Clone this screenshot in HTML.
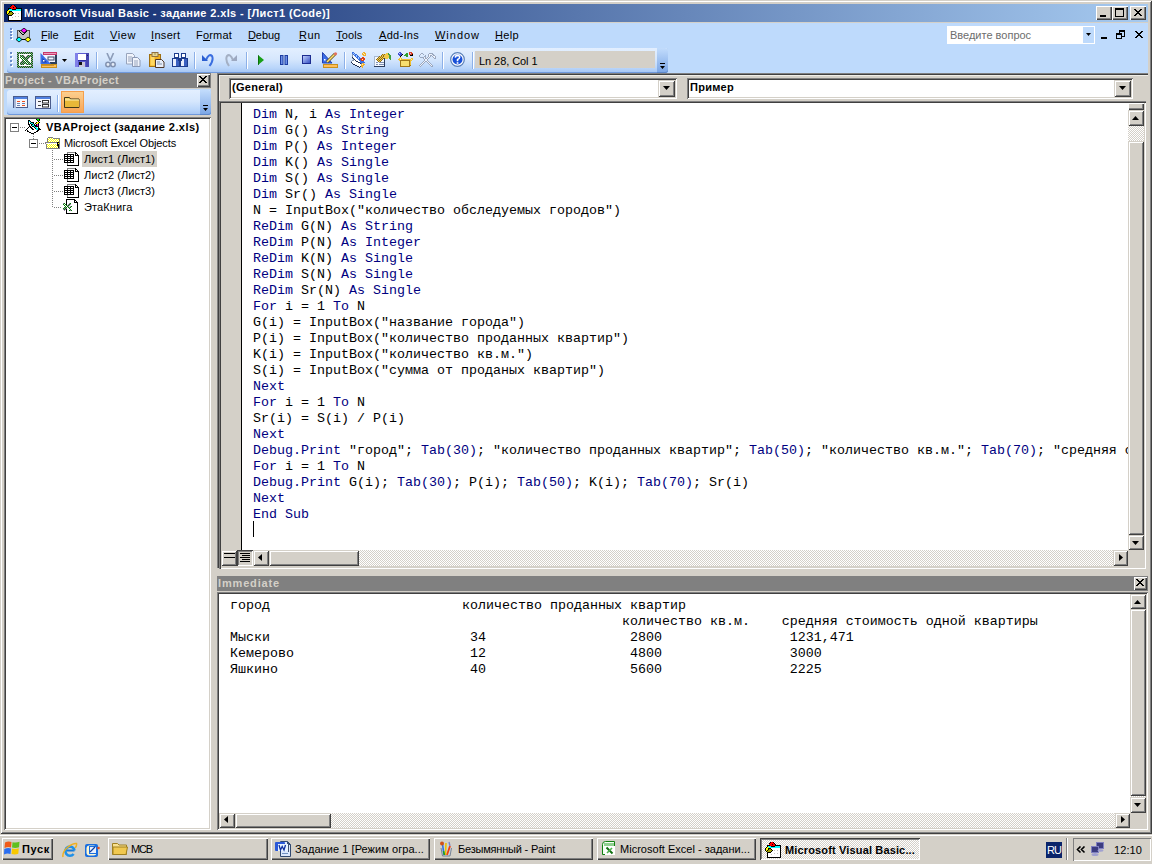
<!DOCTYPE html>
<html><head><meta charset="utf-8"><style>*{margin:0;padding:0;box-sizing:border-box}
html,body{width:1152px;height:864px;overflow:hidden;background:#d4d0c8;font-family:"Liberation Sans",sans-serif;font-size:11px;color:#000}
.a{position:absolute}
.t{white-space:nowrap}
.mono{font-family:"Liberation Mono",monospace;font-size:13.33px;line-height:16px;white-space:pre;color:#000}
.k{color:#000080}
.check{background-color:#fff;background-image:linear-gradient(45deg,#d4d0c8 25%,transparent 25%,transparent 75%,#d4d0c8 75%),linear-gradient(45deg,#d4d0c8 25%,transparent 25%,transparent 75%,#d4d0c8 75%);background-size:2px 2px;background-position:0 0,1px 1px}
svg{display:block}
</style></head><body>
<div class="a " style="left:0px;top:0px;width:1152px;height:834px;background:#d4d0c8;box-shadow:inset 1px 1px #d4d0c8,inset -1px -1px #404040,inset 2px 2px #fff,inset -2px -2px #808080;"></div>
<div class="a " style="left:4px;top:4px;width:1144px;height:18px;background:linear-gradient(to right,#0a246a,#a6caf0);"></div>
<svg class="a" style="left:6px;top:5px" width="16" height="16" shape-rendering="crispEdges"><rect x="5" y="0" width="1" height="1" fill="#000"/><rect x="6" y="0" width="2" height="1" fill="#ff0000"/><rect x="8" y="0" width="1" height="1" fill="#000"/><rect x="4" y="1" width="1" height="1" fill="#000"/><rect x="5" y="1" width="4" height="1" fill="#ff0000"/><rect x="9" y="1" width="1" height="1" fill="#000"/><rect x="4" y="2" width="3" height="1" fill="#ff0000"/><rect x="7" y="2" width="1" height="1" fill="#000"/><rect x="8" y="2" width="2" height="1" fill="#ff0000"/><rect x="10" y="2" width="1" height="1" fill="#000"/><rect x="2" y="3" width="3" height="1" fill="#000"/><rect x="5" y="3" width="5" height="1" fill="#ff0000"/><rect x="10" y="3" width="6" height="1" fill="#000"/><rect x="2" y="4" width="1" height="1" fill="#000"/><rect x="3" y="4" width="3" height="1" fill="#00ffff"/><rect x="6" y="4" width="4" height="1" fill="#000"/><rect x="10" y="4" width="5" height="1" fill="#00ffff"/><rect x="15" y="4" width="1" height="1" fill="#000"/><rect x="1" y="5" width="1" height="1" fill="#000"/><rect x="2" y="5" width="2" height="1" fill="#ffff00"/><rect x="4" y="5" width="11" height="1" fill="#00ffff"/><rect x="15" y="5" width="1" height="1" fill="#000"/><rect x="0" y="6" width="1" height="1" fill="#000"/><rect x="1" y="6" width="2" height="1" fill="#ffff00"/><rect x="3" y="6" width="3" height="1" fill="#000"/><rect x="6" y="6" width="9" height="1" fill="#fff"/><rect x="15" y="6" width="1" height="1" fill="#000"/><rect x="0" y="7" width="1" height="1" fill="#000"/><rect x="1" y="7" width="2" height="1" fill="#ffff00"/><rect x="3" y="7" width="1" height="1" fill="#000"/><rect x="4" y="7" width="2" height="1" fill="#a0a000"/><rect x="6" y="7" width="1" height="1" fill="#000"/><rect x="7" y="7" width="8" height="1" fill="#fff"/><rect x="15" y="7" width="1" height="1" fill="#000"/><rect x="0" y="8" width="1" height="1" fill="#000"/><rect x="1" y="8" width="1" height="1" fill="#ffff00"/><rect x="2" y="8" width="1" height="1" fill="#000"/><rect x="3" y="8" width="4" height="1" fill="#a0a000"/><rect x="7" y="8" width="1" height="1" fill="#000"/><rect x="8" y="8" width="1" height="1" fill="#fff"/><rect x="9" y="8" width="1" height="1" fill="#c0c0c0"/><rect x="10" y="8" width="2" height="1" fill="#fff"/><rect x="12" y="8" width="1" height="1" fill="#c0c0c0"/><rect x="13" y="8" width="2" height="1" fill="#fff"/><rect x="15" y="8" width="1" height="1" fill="#000"/><rect x="1" y="9" width="1" height="1" fill="#000"/><rect x="2" y="9" width="4" height="1" fill="#a0a000"/><rect x="6" y="9" width="1" height="1" fill="#000"/><rect x="7" y="9" width="8" height="1" fill="#fff"/><rect x="15" y="9" width="1" height="1" fill="#000"/><rect x="2" y="10" width="4" height="1" fill="#000"/><rect x="6" y="10" width="9" height="1" fill="#fff"/><rect x="15" y="10" width="1" height="1" fill="#000"/><rect x="2" y="11" width="1" height="1" fill="#000"/><rect x="3" y="11" width="6" height="1" fill="#fff"/><rect x="9" y="11" width="1" height="1" fill="#c0c0c0"/><rect x="10" y="11" width="2" height="1" fill="#fff"/><rect x="12" y="11" width="1" height="1" fill="#c0c0c0"/><rect x="13" y="11" width="2" height="1" fill="#fff"/><rect x="15" y="11" width="1" height="1" fill="#000"/><rect x="2" y="12" width="1" height="1" fill="#000"/><rect x="3" y="12" width="3" height="1" fill="#fff"/><rect x="6" y="12" width="1" height="1" fill="#c0c0c0"/><rect x="7" y="12" width="8" height="1" fill="#fff"/><rect x="15" y="12" width="1" height="1" fill="#000"/><rect x="2" y="13" width="1" height="1" fill="#000"/><rect x="3" y="13" width="12" height="1" fill="#fff"/><rect x="15" y="13" width="1" height="1" fill="#000"/><rect x="2" y="14" width="1" height="1" fill="#000"/><rect x="3" y="14" width="12" height="1" fill="#fff"/><rect x="15" y="14" width="1" height="1" fill="#000"/><rect x="2" y="15" width="14" height="1" fill="#000"/></svg>
<div class="a t" style="left:24px;top:7px;line-height:12px;font-size:11px;color:#fff;font-weight:bold;letter-spacing:0.370px;">Microsoft Visual Basic - задание 2.xls - [Лист1 (Code)]</div>
<div class="a " style="left:1096px;top:6px;width:16px;height:14px;background:#d4d0c8;box-shadow:inset 1px 1px #fff,inset -1px -1px #404040,inset -2px -2px #808080;"></div>
<div class="a " style="left:1112px;top:6px;width:16px;height:14px;background:#d4d0c8;box-shadow:inset 1px 1px #fff,inset -1px -1px #404040,inset -2px -2px #808080;"></div>
<div class="a " style="left:1130px;top:6px;width:16px;height:14px;background:#d4d0c8;box-shadow:inset 1px 1px #fff,inset -1px -1px #404040,inset -2px -2px #808080;"></div>
<div class="a " style="left:1100px;top:15px;width:6px;height:2px;background:#000;"></div>
<div class="a " style="left:1115px;top:8px;width:9px;height:9px;border:1px solid #000;border-top-width:2px;"></div>
<svg class="a" style="left:1134px;top:9px" width="8" height="7" shape-rendering="crispEdges" fill="#000"><rect x="0" y="0" width="2" height="1"/><rect x="6" y="0" width="2" height="1"/><rect x="1" y="1" width="2" height="1"/><rect x="5" y="1" width="2" height="1"/><rect x="2" y="2" width="4" height="1"/><rect x="3" y="3" width="2" height="1"/><rect x="2" y="4" width="4" height="1"/><rect x="1" y="5" width="2" height="1"/><rect x="5" y="5" width="2" height="1"/><rect x="0" y="6" width="2" height="1"/><rect x="6" y="6" width="2" height="1"/></svg>
<div class="a " style="left:4px;top:22px;width:1144px;height:1px;background:#d4d0c8;"></div>
<div class="a " style="left:4px;top:23px;width:1144px;height:50px;background:#bedafc;"></div>
<div class="a " style="left:10px;top:28px;width:2px;height:2px;background:#6a8ccb;box-shadow:1px 1px #fff;"></div>
<div class="a " style="left:10px;top:31px;width:2px;height:2px;background:#6a8ccb;box-shadow:1px 1px #fff;"></div>
<div class="a " style="left:10px;top:34px;width:2px;height:2px;background:#6a8ccb;box-shadow:1px 1px #fff;"></div>
<div class="a " style="left:10px;top:37px;width:2px;height:2px;background:#6a8ccb;box-shadow:1px 1px #fff;"></div>
<svg class="a" style="left:16px;top:28px" width="16" height="15"><rect x="1.5" y="2.5" width="12" height="9" fill="#c4c4c4" stroke="#505050"/><path d="M3 3 L7 7 L11 3" stroke="#000" stroke-width="1" fill="none"/><path d="M1 11.5 L14 11.5" stroke="#000"/><path d="M8 0 L11 2.5 L8 5 L5 2.5 Z" fill="#ff00ff" stroke="#000" stroke-width="0.8"/><path d="M3 9 L6 11.5 L3 14 L0 11.5 Z" fill="#00ffff" stroke="#000" stroke-width="0.8"/><path d="M12 9 L15 11.5 L12 14 L9 11.5 Z" fill="#ffff00" stroke="#000" stroke-width="0.8"/></svg>
<div class="a t" style="left:41px;top:29px;line-height:12px;font-size:11px;color:#000;letter-spacing:-0.059px;">File</div>
<div class="a t" style="left:74px;top:29px;line-height:12px;font-size:11px;color:#000;letter-spacing:0.258px;">Edit</div>
<div class="a t" style="left:110px;top:29px;line-height:12px;font-size:11px;color:#000;letter-spacing:0.586px;">View</div>
<div class="a t" style="left:151px;top:29px;line-height:12px;font-size:11px;color:#000;letter-spacing:0.331px;">Insert</div>
<div class="a t" style="left:196px;top:29px;line-height:12px;font-size:11px;color:#000;letter-spacing:0.193px;">Format</div>
<div class="a t" style="left:248px;top:29px;line-height:12px;font-size:11px;color:#000;letter-spacing:-0.084px;">Debug</div>
<div class="a t" style="left:299px;top:29px;line-height:12px;font-size:11px;color:#000;letter-spacing:0.438px;">Run</div>
<div class="a t" style="left:336px;top:29px;line-height:12px;font-size:11px;color:#000;letter-spacing:0.163px;">Tools</div>
<div class="a t" style="left:379px;top:29px;line-height:12px;font-size:11px;color:#000;letter-spacing:0.297px;">Add-Ins</div>
<div class="a t" style="left:435px;top:29px;line-height:12px;font-size:11px;color:#000;letter-spacing:0.979px;">Window</div>
<div class="a t" style="left:495px;top:29px;line-height:12px;font-size:11px;color:#000;letter-spacing:0.344px;">Help</div>
<div class="a " style="left:41px;top:40px;width:6px;height:1px;background:#000;"></div>
<div class="a " style="left:74px;top:40px;width:7px;height:1px;background:#000;"></div>
<div class="a " style="left:110px;top:40px;width:8px;height:1px;background:#000;"></div>
<div class="a " style="left:151px;top:40px;width:3px;height:1px;background:#000;"></div>
<div class="a " style="left:203px;top:40px;width:7px;height:1px;background:#000;"></div>
<div class="a " style="left:248px;top:40px;width:8px;height:1px;background:#000;"></div>
<div class="a " style="left:299px;top:40px;width:7px;height:1px;background:#000;"></div>
<div class="a " style="left:336px;top:40px;width:7px;height:1px;background:#000;"></div>
<div class="a " style="left:379px;top:40px;width:8px;height:1px;background:#000;"></div>
<div class="a " style="left:435px;top:40px;width:11px;height:1px;background:#000;"></div>
<div class="a " style="left:495px;top:40px;width:8px;height:1px;background:#000;"></div>
<div class="a " style="left:947px;top:26px;width:148px;height:18px;background:#fff;"></div>
<div class="a " style="left:1083px;top:27px;width:11px;height:16px;background:#bedafc;"></div>
<svg class="a" style="left:1086px;top:33px" width="5" height="3"><path d="M0 0h5l-2.5 3z" fill="#000"/></svg>
<div class="a t" style="left:950px;top:29px;line-height:12px;font-size:11px;color:#6d6d6d;">Введите вопрос</div>
<div class="a " style="left:1101px;top:37px;width:6px;height:2px;background:#000;"></div>
<svg class="a" style="left:1116px;top:30px" width="9" height="9" shape-rendering="crispEdges" fill="#000"><rect x="3" y="0" width="6" height="1"/><rect x="3" y="1" width="6" height="1"/><rect x="3" y="2" width="1" height="1"/><rect x="8" y="2" width="1" height="1"/><rect x="0" y="3" width="6" height="1"/><rect x="8" y="3" width="1" height="1"/><rect x="0" y="4" width="6" height="1"/><rect x="8" y="4" width="1" height="1"/><rect x="0" y="5" width="1" height="1"/><rect x="5" y="5" width="1" height="1"/><rect x="8" y="5" width="1" height="1"/><rect x="0" y="6" width="1" height="1"/><rect x="5" y="6" width="4" height="1"/><rect x="0" y="7" width="1" height="1"/><rect x="5" y="7" width="1" height="1"/><rect x="0" y="8" width="6" height="1"/></svg>
<svg class="a" style="left:1135px;top:31px" width="8" height="7" shape-rendering="crispEdges" fill="#000"><rect x="0" y="0" width="2" height="1"/><rect x="6" y="0" width="2" height="1"/><rect x="1" y="1" width="2" height="1"/><rect x="5" y="1" width="2" height="1"/><rect x="2" y="2" width="4" height="1"/><rect x="3" y="3" width="2" height="1"/><rect x="2" y="4" width="4" height="1"/><rect x="1" y="5" width="2" height="1"/><rect x="5" y="5" width="2" height="1"/><rect x="0" y="6" width="2" height="1"/><rect x="6" y="6" width="2" height="1"/></svg>
<div class="a " style="left:7px;top:48px;width:661px;height:25px;border-radius:3px;background:linear-gradient(to bottom,#e3efff 0%,#d6e7fd 45%,#b9d5fa 80%,#a3c4f3 100%);box-shadow:inset 0 -1px #6f99dc;"></div>
<div class="a " style="left:657px;top:48px;width:11px;height:25px;border-radius:0 3px 3px 0;background:linear-gradient(to bottom,#c2dcfc,#7aa5e5);box-shadow:inset 0 -1px #5d87c9;"></div>
<svg class="a" style="left:660px;top:63px" width="6" height="7"><path d="M0 0h5v1h-5z M0 3h5l-2.5 3z" fill="#000"/></svg>
<div class="a " style="left:10px;top:52px;width:2px;height:2px;background:#6a8ccb;box-shadow:1px 1px #fff;"></div>
<div class="a " style="left:10px;top:56px;width:2px;height:2px;background:#6a8ccb;box-shadow:1px 1px #fff;"></div>
<div class="a " style="left:10px;top:60px;width:2px;height:2px;background:#6a8ccb;box-shadow:1px 1px #fff;"></div>
<div class="a " style="left:10px;top:64px;width:2px;height:2px;background:#6a8ccb;box-shadow:1px 1px #fff;"></div>
<div class="a " style="left:96px;top:52px;width:1px;height:17px;background:#8cb0e8;box-shadow:1px 0 #fff;"></div>
<div class="a " style="left:194px;top:52px;width:1px;height:17px;background:#8cb0e8;box-shadow:1px 0 #fff;"></div>
<div class="a " style="left:246px;top:52px;width:1px;height:17px;background:#8cb0e8;box-shadow:1px 0 #fff;"></div>
<div class="a " style="left:344px;top:52px;width:1px;height:17px;background:#8cb0e8;box-shadow:1px 0 #fff;"></div>
<div class="a " style="left:442px;top:52px;width:1px;height:17px;background:#8cb0e8;box-shadow:1px 0 #fff;"></div>
<div class="a " style="left:472px;top:52px;width:1px;height:17px;background:#8cb0e8;box-shadow:1px 0 #fff;"></div>
<div class="a" style="left:0;top:0"><svg class="a" style="left:17px;top:52px" width="16" height="16" shape-rendering="crispEdges"><rect x="0" y="0" width="1" height="1" fill="#008000"/><rect x="1" y="0" width="1" height="1" fill="#9c80a8"/><rect x="2" y="0" width="1" height="1" fill="#008000"/><rect x="3" y="0" width="1" height="1" fill="#9c80a8"/><rect x="4" y="0" width="1" height="1" fill="#008000"/><rect x="5" y="0" width="1" height="1" fill="#9c80a8"/><rect x="6" y="0" width="1" height="1" fill="#008000"/><rect x="7" y="0" width="1" height="1" fill="#9c80a8"/><rect x="8" y="0" width="1" height="1" fill="#008000"/><rect x="9" y="0" width="1" height="1" fill="#9c80a8"/><rect x="10" y="0" width="1" height="1" fill="#008000"/><rect x="11" y="0" width="1" height="1" fill="#9c80a8"/><rect x="12" y="0" width="1" height="1" fill="#008000"/><rect x="13" y="0" width="1" height="1" fill="#9c80a8"/><rect x="14" y="0" width="1" height="1" fill="#008000"/><rect x="15" y="0" width="1" height="1" fill="#9c80a8"/><rect x="0" y="1" width="1" height="1" fill="#9c80a8"/><rect x="1" y="1" width="1" height="1" fill="#008000"/><rect x="2" y="1" width="1" height="1" fill="#9c80a8"/><rect x="3" y="1" width="1" height="1" fill="#008000"/><rect x="4" y="1" width="1" height="1" fill="#9c80a8"/><rect x="5" y="1" width="1" height="1" fill="#008000"/><rect x="6" y="1" width="1" height="1" fill="#9c80a8"/><rect x="7" y="1" width="1" height="1" fill="#008000"/><rect x="8" y="1" width="1" height="1" fill="#9c80a8"/><rect x="9" y="1" width="1" height="1" fill="#008000"/><rect x="10" y="1" width="1" height="1" fill="#9c80a8"/><rect x="11" y="1" width="1" height="1" fill="#008000"/><rect x="12" y="1" width="1" height="1" fill="#9c80a8"/><rect x="13" y="1" width="1" height="1" fill="#008000"/><rect x="14" y="1" width="1" height="1" fill="#9c80a8"/><rect x="15" y="1" width="1" height="1" fill="#008000"/><rect x="0" y="2" width="1" height="1" fill="#008000"/><rect x="1" y="2" width="1" height="1" fill="#9c80a8"/><rect x="2" y="2" width="1" height="1" fill="#fff"/><rect x="3" y="2" width="1" height="1" fill="#fff"/><rect x="4" y="2" width="1" height="1" fill="#fff"/><rect x="5" y="2" width="1" height="1" fill="#fff"/><rect x="6" y="2" width="1" height="1" fill="#fff"/><rect x="7" y="2" width="1" height="1" fill="#fff"/><rect x="8" y="2" width="1" height="1" fill="#fff"/><rect x="9" y="2" width="1" height="1" fill="#fff"/><rect x="10" y="2" width="1" height="1" fill="#fff"/><rect x="11" y="2" width="1" height="1" fill="#fff"/><rect x="12" y="2" width="1" height="1" fill="#fff"/><rect x="13" y="2" width="1" height="1" fill="#fff"/><rect x="14" y="2" width="1" height="1" fill="#008000"/><rect x="15" y="2" width="1" height="1" fill="#9c80a8"/><rect x="0" y="3" width="1" height="1" fill="#9c80a8"/><rect x="1" y="3" width="1" height="1" fill="#008000"/><rect x="2" y="3" width="1" height="1" fill="#fff"/><rect x="3" y="3" width="1" height="1" fill="#008000"/><rect x="4" y="3" width="1" height="1" fill="#9c80a8"/><rect x="5" y="3" width="1" height="1" fill="#008000"/><rect x="6" y="3" width="1" height="1" fill="#9c80a8"/><rect x="7" y="3" width="1" height="1" fill="#fff"/><rect x="8" y="3" width="1" height="1" fill="#fff"/><rect x="9" y="3" width="1" height="1" fill="#fff"/><rect x="10" y="3" width="1" height="1" fill="#9c80a8"/><rect x="11" y="3" width="1" height="1" fill="#008000"/><rect x="12" y="3" width="1" height="1" fill="#9c80a8"/><rect x="13" y="3" width="1" height="1" fill="#008000"/><rect x="14" y="3" width="1" height="1" fill="#9c80a8"/><rect x="15" y="3" width="1" height="1" fill="#008000"/><rect x="0" y="4" width="1" height="1" fill="#008000"/><rect x="1" y="4" width="1" height="1" fill="#9c80a8"/><rect x="2" y="4" width="1" height="1" fill="#fff"/><rect x="3" y="4" width="1" height="1" fill="#9c80a8"/><rect x="4" y="4" width="1" height="1" fill="#008000"/><rect x="5" y="4" width="1" height="1" fill="#9c80a8"/><rect x="6" y="4" width="1" height="1" fill="#008000"/><rect x="7" y="4" width="1" height="1" fill="#9c80a8"/><rect x="8" y="4" width="1" height="1" fill="#fff"/><rect x="9" y="4" width="1" height="1" fill="#9c80a8"/><rect x="10" y="4" width="1" height="1" fill="#008000"/><rect x="11" y="4" width="1" height="1" fill="#9c80a8"/><rect x="12" y="4" width="1" height="1" fill="#008000"/><rect x="13" y="4" width="1" height="1" fill="#9c80a8"/><rect x="14" y="4" width="1" height="1" fill="#008000"/><rect x="15" y="4" width="1" height="1" fill="#9c80a8"/><rect x="0" y="5" width="1" height="1" fill="#9c80a8"/><rect x="1" y="5" width="1" height="1" fill="#008000"/><rect x="2" y="5" width="1" height="1" fill="#fff"/><rect x="3" y="5" width="1" height="1" fill="#008000"/><rect x="4" y="5" width="1" height="1" fill="#fff"/><rect x="5" y="5" width="1" height="1" fill="#008000"/><rect x="6" y="5" width="1" height="1" fill="#9c80a8"/><rect x="7" y="5" width="1" height="1" fill="#008000"/><rect x="8" y="5" width="1" height="1" fill="#9c80a8"/><rect x="9" y="5" width="1" height="1" fill="#008000"/><rect x="10" y="5" width="1" height="1" fill="#9c80a8"/><rect x="11" y="5" width="1" height="1" fill="#008000"/><rect x="12" y="5" width="1" height="1" fill="#9c80a8"/><rect x="13" y="5" width="1" height="1" fill="#fff"/><rect x="14" y="5" width="1" height="1" fill="#9c80a8"/><rect x="15" y="5" width="1" height="1" fill="#008000"/><rect x="0" y="6" width="1" height="1" fill="#008000"/><rect x="1" y="6" width="1" height="1" fill="#9c80a8"/><rect x="2" y="6" width="1" height="1" fill="#fff"/><rect x="3" y="6" width="1" height="1" fill="#fff"/><rect x="4" y="6" width="1" height="1" fill="#008000"/><rect x="5" y="6" width="1" height="1" fill="#fff"/><rect x="6" y="6" width="1" height="1" fill="#008000"/><rect x="7" y="6" width="1" height="1" fill="#9c80a8"/><rect x="8" y="6" width="1" height="1" fill="#008000"/><rect x="9" y="6" width="1" height="1" fill="#9c80a8"/><rect x="10" y="6" width="1" height="1" fill="#008000"/><rect x="11" y="6" width="1" height="1" fill="#9c80a8"/><rect x="12" y="6" width="1" height="1" fill="#fff"/><rect x="13" y="6" width="1" height="1" fill="#fff"/><rect x="14" y="6" width="1" height="1" fill="#008000"/><rect x="15" y="6" width="1" height="1" fill="#9c80a8"/><rect x="0" y="7" width="1" height="1" fill="#9c80a8"/><rect x="1" y="7" width="1" height="1" fill="#008000"/><rect x="2" y="7" width="1" height="1" fill="#fff"/><rect x="3" y="7" width="1" height="1" fill="#fff"/><rect x="4" y="7" width="1" height="1" fill="#fff"/><rect x="5" y="7" width="1" height="1" fill="#008000"/><rect x="6" y="7" width="1" height="1" fill="#fff"/><rect x="7" y="7" width="1" height="1" fill="#008000"/><rect x="8" y="7" width="1" height="1" fill="#9c80a8"/><rect x="9" y="7" width="1" height="1" fill="#008000"/><rect x="10" y="7" width="1" height="1" fill="#9c80a8"/><rect x="11" y="7" width="1" height="1" fill="#fff"/><rect x="12" y="7" width="1" height="1" fill="#fff"/><rect x="13" y="7" width="1" height="1" fill="#fff"/><rect x="14" y="7" width="1" height="1" fill="#9c80a8"/><rect x="15" y="7" width="1" height="1" fill="#008000"/><rect x="0" y="8" width="1" height="1" fill="#008000"/><rect x="1" y="8" width="1" height="1" fill="#9c80a8"/><rect x="2" y="8" width="1" height="1" fill="#fff"/><rect x="3" y="8" width="1" height="1" fill="#fff"/><rect x="4" y="8" width="1" height="1" fill="#fff"/><rect x="5" y="8" width="1" height="1" fill="#9c80a8"/><rect x="6" y="8" width="1" height="1" fill="#008000"/><rect x="7" y="8" width="1" height="1" fill="#fff"/><rect x="8" y="8" width="1" height="1" fill="#008000"/><rect x="9" y="8" width="1" height="1" fill="#9c80a8"/><rect x="10" y="8" width="1" height="1" fill="#008000"/><rect x="11" y="8" width="1" height="1" fill="#fff"/><rect x="12" y="8" width="1" height="1" fill="#fff"/><rect x="13" y="8" width="1" height="1" fill="#fff"/><rect x="14" y="8" width="1" height="1" fill="#008000"/><rect x="15" y="8" width="1" height="1" fill="#9c80a8"/><rect x="0" y="9" width="1" height="1" fill="#9c80a8"/><rect x="1" y="9" width="1" height="1" fill="#008000"/><rect x="2" y="9" width="1" height="1" fill="#fff"/><rect x="3" y="9" width="1" height="1" fill="#fff"/><rect x="4" y="9" width="1" height="1" fill="#9c80a8"/><rect x="5" y="9" width="1" height="1" fill="#008000"/><rect x="6" y="9" width="1" height="1" fill="#9c80a8"/><rect x="7" y="9" width="1" height="1" fill="#008000"/><rect x="8" y="9" width="1" height="1" fill="#fff"/><rect x="9" y="9" width="1" height="1" fill="#008000"/><rect x="10" y="9" width="1" height="1" fill="#9c80a8"/><rect x="11" y="9" width="1" height="1" fill="#008000"/><rect x="12" y="9" width="1" height="1" fill="#fff"/><rect x="13" y="9" width="1" height="1" fill="#fff"/><rect x="14" y="9" width="1" height="1" fill="#9c80a8"/><rect x="15" y="9" width="1" height="1" fill="#008000"/><rect x="0" y="10" width="1" height="1" fill="#008000"/><rect x="1" y="10" width="1" height="1" fill="#9c80a8"/><rect x="2" y="10" width="1" height="1" fill="#fff"/><rect x="3" y="10" width="1" height="1" fill="#9c80a8"/><rect x="4" y="10" width="1" height="1" fill="#008000"/><rect x="5" y="10" width="1" height="1" fill="#9c80a8"/><rect x="6" y="10" width="1" height="1" fill="#008000"/><rect x="7" y="10" width="1" height="1" fill="#9c80a8"/><rect x="8" y="10" width="1" height="1" fill="#008000"/><rect x="9" y="10" width="1" height="1" fill="#fff"/><rect x="10" y="10" width="1" height="1" fill="#008000"/><rect x="11" y="10" width="1" height="1" fill="#9c80a8"/><rect x="12" y="10" width="1" height="1" fill="#008000"/><rect x="13" y="10" width="1" height="1" fill="#fff"/><rect x="14" y="10" width="1" height="1" fill="#008000"/><rect x="15" y="10" width="1" height="1" fill="#9c80a8"/><rect x="0" y="11" width="1" height="1" fill="#9c80a8"/><rect x="1" y="11" width="1" height="1" fill="#008000"/><rect x="2" y="11" width="1" height="1" fill="#fff"/><rect x="3" y="11" width="1" height="1" fill="#008000"/><rect x="4" y="11" width="1" height="1" fill="#9c80a8"/><rect x="5" y="11" width="1" height="1" fill="#008000"/><rect x="6" y="11" width="1" height="1" fill="#9c80a8"/><rect x="7" y="11" width="1" height="1" fill="#008000"/><rect x="8" y="11" width="1" height="1" fill="#9c80a8"/><rect x="9" y="11" width="1" height="1" fill="#008000"/><rect x="10" y="11" width="1" height="1" fill="#fff"/><rect x="11" y="11" width="1" height="1" fill="#008000"/><rect x="12" y="11" width="1" height="1" fill="#9c80a8"/><rect x="13" y="11" width="1" height="1" fill="#008000"/><rect x="14" y="11" width="1" height="1" fill="#9c80a8"/><rect x="15" y="11" width="1" height="1" fill="#008000"/><rect x="0" y="12" width="1" height="1" fill="#008000"/><rect x="1" y="12" width="1" height="1" fill="#9c80a8"/><rect x="2" y="12" width="1" height="1" fill="#fff"/><rect x="3" y="12" width="1" height="1" fill="#9c80a8"/><rect x="4" y="12" width="1" height="1" fill="#008000"/><rect x="5" y="12" width="1" height="1" fill="#9c80a8"/><rect x="6" y="12" width="1" height="1" fill="#008000"/><rect x="7" y="12" width="1" height="1" fill="#fff"/><rect x="8" y="12" width="1" height="1" fill="#fff"/><rect x="9" y="12" width="1" height="1" fill="#9c80a8"/><rect x="10" y="12" width="1" height="1" fill="#008000"/><rect x="11" y="12" width="1" height="1" fill="#9c80a8"/><rect x="12" y="12" width="1" height="1" fill="#008000"/><rect x="13" y="12" width="1" height="1" fill="#9c80a8"/><rect x="14" y="12" width="1" height="1" fill="#008000"/><rect x="15" y="12" width="1" height="1" fill="#9c80a8"/><rect x="0" y="13" width="1" height="1" fill="#9c80a8"/><rect x="1" y="13" width="1" height="1" fill="#008000"/><rect x="2" y="13" width="1" height="1" fill="#fff"/><rect x="3" y="13" width="1" height="1" fill="#fff"/><rect x="4" y="13" width="1" height="1" fill="#fff"/><rect x="5" y="13" width="1" height="1" fill="#fff"/><rect x="6" y="13" width="1" height="1" fill="#fff"/><rect x="7" y="13" width="1" height="1" fill="#fff"/><rect x="8" y="13" width="1" height="1" fill="#fff"/><rect x="9" y="13" width="1" height="1" fill="#fff"/><rect x="10" y="13" width="1" height="1" fill="#fff"/><rect x="11" y="13" width="1" height="1" fill="#fff"/><rect x="12" y="13" width="1" height="1" fill="#fff"/><rect x="13" y="13" width="1" height="1" fill="#fff"/><rect x="14" y="13" width="1" height="1" fill="#9c80a8"/><rect x="15" y="13" width="1" height="1" fill="#008000"/><rect x="0" y="14" width="1" height="1" fill="#008000"/><rect x="1" y="14" width="1" height="1" fill="#9c80a8"/><rect x="2" y="14" width="1" height="1" fill="#008000"/><rect x="3" y="14" width="1" height="1" fill="#9c80a8"/><rect x="4" y="14" width="1" height="1" fill="#008000"/><rect x="5" y="14" width="1" height="1" fill="#9c80a8"/><rect x="6" y="14" width="1" height="1" fill="#008000"/><rect x="7" y="14" width="1" height="1" fill="#9c80a8"/><rect x="8" y="14" width="1" height="1" fill="#008000"/><rect x="9" y="14" width="1" height="1" fill="#9c80a8"/><rect x="10" y="14" width="1" height="1" fill="#008000"/><rect x="11" y="14" width="1" height="1" fill="#9c80a8"/><rect x="12" y="14" width="1" height="1" fill="#008000"/><rect x="13" y="14" width="1" height="1" fill="#9c80a8"/><rect x="14" y="14" width="1" height="1" fill="#008000"/><rect x="15" y="14" width="1" height="1" fill="#9c80a8"/><rect x="0" y="15" width="1" height="1" fill="#9c80a8"/><rect x="1" y="15" width="1" height="1" fill="#008000"/><rect x="2" y="15" width="1" height="1" fill="#9c80a8"/><rect x="3" y="15" width="1" height="1" fill="#008000"/><rect x="4" y="15" width="1" height="1" fill="#9c80a8"/><rect x="5" y="15" width="1" height="1" fill="#008000"/><rect x="6" y="15" width="1" height="1" fill="#9c80a8"/><rect x="7" y="15" width="1" height="1" fill="#008000"/><rect x="8" y="15" width="1" height="1" fill="#9c80a8"/><rect x="9" y="15" width="1" height="1" fill="#008000"/><rect x="10" y="15" width="1" height="1" fill="#9c80a8"/><rect x="11" y="15" width="1" height="1" fill="#008000"/><rect x="12" y="15" width="1" height="1" fill="#9c80a8"/><rect x="13" y="15" width="1" height="1" fill="#008000"/><rect x="14" y="15" width="1" height="1" fill="#9c80a8"/><rect x="15" y="15" width="1" height="1" fill="#008000"/></svg><svg class="a" style="left:40px;top:52px" width="17" height="16"><rect x="3" y="0" width="14" height="3" fill="#c8386a"/><rect x="4" y="1" width="12" height="1" fill="#e898b8"/><rect x="4" y="3" width="12" height="9" fill="#f4f4ff"/><rect x="15" y="3" width="2" height="9" fill="#2c405c"/><rect x="10" y="10" width="7" height="2" fill="#2c405c"/><rect x="8" y="5" width="6" height="3" fill="none" stroke="#3c4c68" stroke-width="1"/><path d="M0.5 1 L0.5 12 L11 12 Z" fill="#3a6ee8"/><path d="M2.5 6 L2.5 10.5 L7 10.5 Z" fill="#1a3ca8"/><rect x="3" y="8" width="1.5" height="1.5" fill="#fff"/><rect x="1" y="12" width="16" height="4" fill="#c8901c"/><rect x="2" y="13" width="14" height="2" fill="#ffbe58"/><path d="M3 13v1M5 13v1M7 13v1M9 13v1M11 13v1M13 13v1" stroke="#a06a10" stroke-width="1"/></svg><svg class="a" style="left:62px;top:59px" width="5" height="3"><path d="M0 0h5l-2.5 3z" fill="#000"/></svg><svg class="a" style="left:75px;top:53px" width="15" height="14"><rect x="0" y="0" width="14" height="14" rx="1" fill="#5a5ad0"/><rect x="0" y="0" width="3" height="14" fill="#8080e8"/><rect x="11" y="0" width="3" height="14" fill="#4444b0"/><rect x="3" y="1" width="8" height="6" fill="#fff"/><rect x="3" y="7" width="8" height="1" fill="#3030a0"/><rect x="4" y="9" width="6" height="5" fill="#c8c8d8"/><rect x="4" y="9" width="3" height="3" fill="#101010"/><rect x="12" y="2" width="1" height="1" fill="#202060"/></svg><svg class="a" style="left:105px;top:53px" width="11" height="15"><path d="M2 0 L5.5 8 M8.5 0 L5 8" stroke="#8c9cb8" stroke-width="1.6" fill="none"/><circle cx="3" cy="11.5" r="2.2" stroke="#8292b0" stroke-width="1.5" fill="#e4ecf8"/><circle cx="8" cy="11.5" r="2.2" stroke="#8292b0" stroke-width="1.5" fill="#e4ecf8"/></svg><svg class="a" style="left:126px;top:53px" width="15" height="14"><path d="M0.5 0.5h6l2 2v8.5h-8z" fill="#f0f4fc" stroke="#98a4bc"/><path d="M2 4h4M2 6h4M2 8h4" stroke="#98a4bc"/><path d="M6.5 4.5h5l2.5 2.5v6.5h-7.5z" fill="#f0f4fc" stroke="#8a98b4"/><path d="M8 8h4M8 10h4M8 12h4" stroke="#98a4bc"/></svg><svg class="a" style="left:149px;top:52px" width="16" height="16"><rect x="0.5" y="2.5" width="11" height="12" fill="#f0b020" stroke="#a07010"/><rect x="1.5" y="3.5" width="4" height="10" fill="#ffd860"/><rect x="3" y="0.5" width="6" height="4" fill="#e8d890" stroke="#907040"/><rect x="5.5" y="1.5" width="1" height="1" fill="#404040"/><path d="M6.5 7.5h6l2.5 2.5v5.5h-8.5z" fill="#e8eef8" stroke="#503828"/><path d="M8 10h3M8 12h5" stroke="#8090a8"/></svg><svg class="a" style="left:172px;top:52px" width="16" height="16"><rect x="2.5" y="1.5" width="4" height="4" fill="#fff" stroke="#1c3c8c"/><rect x="9.5" y="1.5" width="4" height="4" fill="#fff" stroke="#1c3c8c"/><rect x="0.5" y="6.5" width="7" height="8" fill="#e8eefc" stroke="#1c3c8c"/><rect x="8.5" y="6.5" width="7" height="8" fill="#e8eefc" stroke="#1c3c8c"/><rect x="4" y="7" width="3" height="7" fill="#3a60c0"/><rect x="12" y="7" width="3" height="7" fill="#3a60c0"/><rect x="6" y="6" width="4" height="3" fill="#1c3c8c"/></svg><svg class="a" style="left:202px;top:52px" width="13" height="16"><path d="M4 8 Q7 1 10 4 Q12 8 7.5 14" stroke="#3a6ee0" stroke-width="2" fill="none"/><path d="M0 3 L0 9 L6 9 Z" fill="#2a5ed0"/></svg><svg class="a" style="left:224px;top:52px" width="14" height="16"><path d="M9 8 Q6 1 3 4 Q1 8 5 14" stroke="#a4b0c4" stroke-width="2" fill="none"/><path d="M13 3 L13 9 L7 9 Z" fill="#9ca8c0"/></svg><svg class="a" style="left:258px;top:55px" width="6" height="10"><path d="M0 0 L6 5 L0 10 Z" fill="#18a018"/><path d="M0 0 L0 10 L1 9.5 L1 1 Z" fill="#0a700a"/></svg><svg class="a" style="left:280px;top:55px" width="8" height="10"><rect x="0.5" y="0.5" width="2.5" height="9" fill="#6c90e8" stroke="#1c3ca0"/><rect x="5" y="0.5" width="2.5" height="9" fill="#6c90e8" stroke="#1c3ca0"/></svg><svg class="a" style="left:302px;top:55px" width="9" height="9"><defs><linearGradient id="gs" x1="0" y1="0" x2="1" y2="1"><stop offset="0" stop-color="#c8d8ff"/><stop offset="1" stop-color="#2c48c0"/></linearGradient></defs><rect x="0.5" y="0.5" width="8" height="8" fill="url(#gs)" stroke="#1c2c90"/></svg><svg class="a" style="left:322px;top:52px" width="16" height="16"><path d="M0.5 0.5 L0.5 11 L10 11 Z" fill="#3a6ee8" stroke="#2040b0"/><rect x="2" y="7" width="1.5" height="1.5" fill="#fff"/><path d="M5 10 L13 2" stroke="#5a4818" stroke-width="3"/><path d="M5 10 L13 2" stroke="#ffe070" stroke-width="1.6"/><circle cx="13.5" cy="1.8" r="1.6" fill="#e07060"/><rect x="1" y="12" width="15" height="4" fill="#c8901c"/><rect x="2" y="13" width="13" height="2" fill="#ffbe58"/></svg><svg class="a" style="left:350px;top:52px" width="17" height="16" shape-rendering="crispEdges"><rect x="2" y="0" width="2" height="1" fill="#3a70e0"/><rect x="13" y="0" width="2" height="1" fill="#f0b030"/><rect x="2" y="1" width="1" height="1" fill="#3a70e0"/><rect x="3" y="1" width="1" height="1" fill="#a0c8ff"/><rect x="4" y="1" width="1" height="1" fill="#3a70e0"/><rect x="12" y="1" width="1" height="1" fill="#f0b030"/><rect x="13" y="1" width="1" height="1" fill="#fff0b0"/><rect x="14" y="1" width="2" height="1" fill="#f0b030"/><rect x="2" y="2" width="1" height="1" fill="#8898b0"/><rect x="3" y="2" width="1" height="1" fill="#3a70e0"/><rect x="4" y="2" width="1" height="1" fill="#a0c8ff"/><rect x="5" y="2" width="2" height="1" fill="#3a70e0"/><rect x="12" y="2" width="2" height="1" fill="#f0b030"/><rect x="14" y="2" width="1" height="1" fill="#fff0b0"/><rect x="15" y="2" width="1" height="1" fill="#f0b030"/><rect x="2" y="3" width="1" height="1" fill="#8898b0"/><rect x="3" y="3" width="1" height="1" fill="#fff"/><rect x="4" y="3" width="2" height="1" fill="#3a70e0"/><rect x="6" y="3" width="1" height="1" fill="#a0c8ff"/><rect x="7" y="3" width="1" height="1" fill="#3a70e0"/><rect x="13" y="3" width="3" height="1" fill="#f0b030"/><rect x="2" y="4" width="1" height="1" fill="#8898b0"/><rect x="3" y="4" width="2" height="1" fill="#fff"/><rect x="5" y="4" width="1" height="1" fill="#3a70e0"/><rect x="6" y="4" width="1" height="1" fill="#a0c8ff"/><rect x="7" y="4" width="2" height="1" fill="#3a70e0"/><rect x="2" y="5" width="1" height="1" fill="#203050"/><rect x="3" y="5" width="3" height="1" fill="#fff"/><rect x="6" y="5" width="2" height="1" fill="#3a70e0"/><rect x="8" y="5" width="1" height="1" fill="#a0c8ff"/><rect x="9" y="5" width="1" height="1" fill="#3a70e0"/><rect x="12" y="5" width="2" height="1" fill="#e04018"/><rect x="2" y="6" width="1" height="1" fill="#8898b0"/><rect x="3" y="6" width="1" height="1" fill="#203050"/><rect x="4" y="6" width="3" height="1" fill="#fff"/><rect x="7" y="6" width="1" height="1" fill="#3a70e0"/><rect x="8" y="6" width="1" height="1" fill="#a0c8ff"/><rect x="9" y="6" width="2" height="1" fill="#3a70e0"/><rect x="11" y="6" width="4" height="1" fill="#e04018"/><rect x="3" y="7" width="1" height="1" fill="#8898b0"/><rect x="4" y="7" width="1" height="1" fill="#203050"/><rect x="5" y="7" width="3" height="1" fill="#fff"/><rect x="8" y="7" width="2" height="1" fill="#3a70e0"/><rect x="10" y="7" width="2" height="1" fill="#e04018"/><rect x="12" y="7" width="1" height="1" fill="#fff0b0"/><rect x="13" y="7" width="2" height="1" fill="#e04018"/><rect x="2" y="8" width="2" height="1" fill="#8898b0"/><rect x="4" y="8" width="1" height="1" fill="#fff"/><rect x="5" y="8" width="1" height="1" fill="#203050"/><rect x="6" y="8" width="3" height="1" fill="#fff"/><rect x="9" y="8" width="2" height="1" fill="#3a70e0"/><rect x="11" y="8" width="3" height="1" fill="#e04018"/><rect x="1" y="9" width="1" height="1" fill="#8898b0"/><rect x="2" y="9" width="4" height="1" fill="#fff"/><rect x="6" y="9" width="2" height="1" fill="#203050"/><rect x="8" y="9" width="2" height="1" fill="#fff"/><rect x="10" y="9" width="4" height="1" fill="#3a70e0"/><rect x="1" y="10" width="1" height="1" fill="#203050"/><rect x="2" y="10" width="6" height="1" fill="#fff"/><rect x="8" y="10" width="2" height="1" fill="#203050"/><rect x="10" y="10" width="5" height="1" fill="#3a70e0"/><rect x="2" y="11" width="1" height="1" fill="#203050"/><rect x="3" y="11" width="7" height="1" fill="#fff"/><rect x="10" y="11" width="1" height="1" fill="#203050"/><rect x="11" y="11" width="1" height="1" fill="#3a70e0"/><rect x="12" y="11" width="2" height="1" fill="#f0b030"/><rect x="3" y="12" width="2" height="1" fill="#203050"/><rect x="5" y="12" width="6" height="1" fill="#fff"/><rect x="11" y="12" width="1" height="1" fill="#f0b030"/><rect x="12" y="12" width="1" height="1" fill="#fff0b0"/><rect x="13" y="12" width="2" height="1" fill="#f0b030"/><rect x="5" y="13" width="2" height="1" fill="#203050"/><rect x="7" y="13" width="4" height="1" fill="#fff"/><rect x="11" y="13" width="3" height="1" fill="#f0b030"/><rect x="7" y="14" width="2" height="1" fill="#203050"/><rect x="9" y="14" width="1" height="1" fill="#fff"/><rect x="10" y="14" width="1" height="1" fill="#203050"/><rect x="11" y="14" width="2" height="1" fill="#f0b030"/><rect x="9" y="15" width="1" height="1" fill="#203050"/><rect x="12" y="15" width="1" height="1" fill="#f0b030"/></svg><svg class="a" style="left:374px;top:53px" width="17" height="14" shape-rendering="crispEdges"><rect x="12" y="0" width="2" height="1" fill="#f0c848"/><rect x="14" y="0" width="1" height="1" fill="#40a040"/><rect x="8" y="1" width="1" height="1" fill="#8a6a18"/><rect x="9" y="1" width="1" height="1" fill="#f0c848"/><rect x="10" y="1" width="1" height="1" fill="#8a6a18"/><rect x="11" y="1" width="3" height="1" fill="#f0c848"/><rect x="14" y="1" width="2" height="1" fill="#40a040"/><rect x="7" y="2" width="1" height="1" fill="#8a6a18"/><rect x="8" y="2" width="1" height="1" fill="#f0c848"/><rect x="9" y="2" width="1" height="1" fill="#8a6a18"/><rect x="10" y="2" width="5" height="1" fill="#f0c848"/><rect x="15" y="2" width="2" height="1" fill="#40a040"/><rect x="0" y="3" width="5" height="1" fill="#a8b8d0"/><rect x="5" y="3" width="1" height="1" fill="#8a6a18"/><rect x="6" y="3" width="1" height="1" fill="#f0c848"/><rect x="7" y="3" width="1" height="1" fill="#8a6a18"/><rect x="8" y="3" width="1" height="1" fill="#f0c848"/><rect x="9" y="3" width="1" height="1" fill="#8a6a18"/><rect x="10" y="3" width="5" height="1" fill="#f0c848"/><rect x="15" y="3" width="2" height="1" fill="#40a040"/><rect x="0" y="4" width="1" height="1" fill="#a8b8d0"/><rect x="1" y="4" width="3" height="1" fill="#f4f8ff"/><rect x="4" y="4" width="1" height="1" fill="#8a6a18"/><rect x="5" y="4" width="1" height="1" fill="#f0c848"/><rect x="6" y="4" width="1" height="1" fill="#8a6a18"/><rect x="7" y="4" width="1" height="1" fill="#f0c848"/><rect x="8" y="4" width="1" height="1" fill="#8a6a18"/><rect x="9" y="4" width="6" height="1" fill="#f0c848"/><rect x="15" y="4" width="2" height="1" fill="#40a040"/><rect x="0" y="5" width="1" height="1" fill="#a8b8d0"/><rect x="1" y="5" width="2" height="1" fill="#f4f8ff"/><rect x="3" y="5" width="1" height="1" fill="#8a6a18"/><rect x="4" y="5" width="1" height="1" fill="#f0c848"/><rect x="5" y="5" width="1" height="1" fill="#8a6a18"/><rect x="6" y="5" width="1" height="1" fill="#f0c848"/><rect x="7" y="5" width="1" height="1" fill="#8a6a18"/><rect x="8" y="5" width="1" height="1" fill="#f0c848"/><rect x="9" y="5" width="1" height="1" fill="#8a6a18"/><rect x="10" y="5" width="1" height="1" fill="#2c3c5c"/><rect x="11" y="5" width="3" height="1" fill="#f0c848"/><rect x="15" y="5" width="2" height="1" fill="#40a040"/><rect x="0" y="6" width="1" height="1" fill="#a8b8d0"/><rect x="1" y="6" width="1" height="1" fill="#f4f8ff"/><rect x="2" y="6" width="1" height="1" fill="#8a6a18"/><rect x="3" y="6" width="1" height="1" fill="#f0c848"/><rect x="4" y="6" width="1" height="1" fill="#8a6a18"/><rect x="5" y="6" width="1" height="1" fill="#f0c848"/><rect x="6" y="6" width="1" height="1" fill="#8a6a18"/><rect x="7" y="6" width="1" height="1" fill="#f0c848"/><rect x="8" y="6" width="1" height="1" fill="#8a6a18"/><rect x="9" y="6" width="1" height="1" fill="#f4f8ff"/><rect x="10" y="6" width="1" height="1" fill="#2c3c5c"/><rect x="16" y="6" width="1" height="1" fill="#40a040"/><rect x="0" y="7" width="1" height="1" fill="#a8b8d0"/><rect x="1" y="7" width="2" height="1" fill="#f4f8ff"/><rect x="3" y="7" width="1" height="1" fill="#8a6a18"/><rect x="4" y="7" width="1" height="1" fill="#f0c848"/><rect x="5" y="7" width="1" height="1" fill="#8a6a18"/><rect x="6" y="7" width="1" height="1" fill="#f0c848"/><rect x="7" y="7" width="1" height="1" fill="#8a6a18"/><rect x="8" y="7" width="2" height="1" fill="#f4f8ff"/><rect x="10" y="7" width="1" height="1" fill="#2c3c5c"/><rect x="0" y="8" width="1" height="1" fill="#a8b8d0"/><rect x="1" y="8" width="3" height="1" fill="#f4f8ff"/><rect x="4" y="8" width="1" height="1" fill="#8a6a18"/><rect x="5" y="8" width="1" height="1" fill="#f0c848"/><rect x="6" y="8" width="1" height="1" fill="#8a6a18"/><rect x="7" y="8" width="3" height="1" fill="#f4f8ff"/><rect x="10" y="8" width="1" height="1" fill="#2c3c5c"/><rect x="0" y="9" width="1" height="1" fill="#a8b8d0"/><rect x="1" y="9" width="1" height="1" fill="#f4f8ff"/><rect x="2" y="9" width="2" height="1" fill="#8090b0"/><rect x="4" y="9" width="1" height="1" fill="#f4f8ff"/><rect x="5" y="9" width="5" height="1" fill="#8090b0"/><rect x="10" y="9" width="1" height="1" fill="#2c3c5c"/><rect x="0" y="10" width="1" height="1" fill="#a8b8d0"/><rect x="1" y="10" width="9" height="1" fill="#f4f8ff"/><rect x="10" y="10" width="1" height="1" fill="#2c3c5c"/><rect x="0" y="11" width="1" height="1" fill="#a8b8d0"/><rect x="1" y="11" width="1" height="1" fill="#f4f8ff"/><rect x="2" y="11" width="2" height="1" fill="#8090b0"/><rect x="4" y="11" width="1" height="1" fill="#f4f8ff"/><rect x="5" y="11" width="5" height="1" fill="#8090b0"/><rect x="10" y="11" width="1" height="1" fill="#2c3c5c"/><rect x="0" y="12" width="1" height="1" fill="#a8b8d0"/><rect x="1" y="12" width="9" height="1" fill="#f4f8ff"/><rect x="10" y="12" width="1" height="1" fill="#2c3c5c"/><rect x="0" y="13" width="11" height="1" fill="#2c3c5c"/></svg><svg class="a" style="left:397px;top:52px" width="16" height="15" shape-rendering="crispEdges"><rect x="2" y="0" width="2" height="1" fill="#4050d0"/><rect x="12" y="0" width="3" height="1" fill="#e04020"/><rect x="1" y="1" width="1" height="1" fill="#4050d0"/><rect x="2" y="1" width="1" height="1" fill="#c0c8ff"/><rect x="3" y="1" width="2" height="1" fill="#4050d0"/><rect x="9" y="1" width="2" height="1" fill="#30a030"/><rect x="12" y="1" width="1" height="1" fill="#e04020"/><rect x="13" y="1" width="1" height="1" fill="#c0c8ff"/><rect x="14" y="1" width="2" height="1" fill="#e04020"/><rect x="1" y="2" width="4" height="1" fill="#4050d0"/><rect x="5" y="2" width="1" height="1" fill="#000"/><rect x="8" y="2" width="3" height="1" fill="#30a030"/><rect x="12" y="2" width="3" height="1" fill="#e04020"/><rect x="15" y="2" width="1" height="1" fill="#000"/><rect x="2" y="3" width="2" height="1" fill="#4050d0"/><rect x="4" y="3" width="1" height="1" fill="#000"/><rect x="7" y="3" width="4" height="1" fill="#30a030"/><rect x="13" y="3" width="3" height="1" fill="#000"/><rect x="3" y="4" width="1" height="1" fill="#000"/><rect x="9" y="4" width="2" height="1" fill="#30a030"/><rect x="3" y="5" width="1" height="1" fill="#f0c030"/><rect x="2" y="6" width="1" height="1" fill="#f0c030"/><rect x="3" y="6" width="1" height="1" fill="#fff0a0"/><rect x="4" y="6" width="1" height="1" fill="#f0c030"/><rect x="14" y="6" width="2" height="1" fill="#f0c030"/><rect x="1" y="7" width="2" height="1" fill="#f0c030"/><rect x="3" y="7" width="1" height="1" fill="#fff0a0"/><rect x="4" y="7" width="10" height="1" fill="#f0c030"/><rect x="14" y="7" width="1" height="1" fill="#fff0a0"/><rect x="15" y="7" width="1" height="1" fill="#f0c030"/><rect x="2" y="8" width="1" height="1" fill="#f0c030"/><rect x="3" y="8" width="10" height="1" fill="#a07818"/><rect x="13" y="8" width="2" height="1" fill="#f0c030"/><rect x="3" y="9" width="1" height="1" fill="#a07818"/><rect x="4" y="9" width="8" height="1" fill="#f8e070"/><rect x="12" y="9" width="1" height="1" fill="#a07818"/><rect x="13" y="9" width="1" height="1" fill="#f0c030"/><rect x="3" y="10" width="1" height="1" fill="#a07818"/><rect x="4" y="10" width="8" height="1" fill="#f8e070"/><rect x="12" y="10" width="1" height="1" fill="#a07818"/><rect x="13" y="10" width="1" height="1" fill="#f0c030"/><rect x="3" y="11" width="1" height="1" fill="#a07818"/><rect x="4" y="11" width="8" height="1" fill="#f8e070"/><rect x="12" y="11" width="1" height="1" fill="#a07818"/><rect x="13" y="11" width="1" height="1" fill="#f0c030"/><rect x="3" y="12" width="1" height="1" fill="#a07818"/><rect x="4" y="12" width="8" height="1" fill="#f8e070"/><rect x="12" y="12" width="1" height="1" fill="#a07818"/><rect x="13" y="12" width="1" height="1" fill="#f0c030"/><rect x="3" y="13" width="1" height="1" fill="#a07818"/><rect x="4" y="13" width="8" height="1" fill="#f8e070"/><rect x="12" y="13" width="2" height="1" fill="#a07818"/><rect x="3" y="14" width="10" height="1" fill="#a07818"/></svg><svg class="a" style="left:419px;top:52px" width="18" height="15" shape-rendering="crispEdges"><rect x="2" y="1" width="2" height="1" fill="#9aa8c0"/><rect x="10" y="1" width="4" height="1" fill="#9aa8c0"/><rect x="1" y="2" width="1" height="1" fill="#9aa8c0"/><rect x="2" y="2" width="1" height="1" fill="#f0f4fc"/><rect x="4" y="2" width="1" height="1" fill="#9aa8c0"/><rect x="9" y="2" width="1" height="1" fill="#9aa8c0"/><rect x="10" y="2" width="3" height="1" fill="#f0f4fc"/><rect x="13" y="2" width="2" height="1" fill="#9aa8c0"/><rect x="0" y="3" width="1" height="1" fill="#9aa8c0"/><rect x="6" y="3" width="1" height="1" fill="#9aa8c0"/><rect x="9" y="3" width="1" height="1" fill="#9aa8c0"/><rect x="10" y="3" width="1" height="1" fill="#f0f4fc"/><rect x="11" y="3" width="2" height="1" fill="#9aa8c0"/><rect x="13" y="3" width="1" height="1" fill="#f0f4fc"/><rect x="14" y="3" width="2" height="1" fill="#9aa8c0"/><rect x="0" y="4" width="1" height="1" fill="#9aa8c0"/><rect x="5" y="4" width="2" height="1" fill="#9aa8c0"/><rect x="9" y="4" width="1" height="1" fill="#9aa8c0"/><rect x="10" y="4" width="1" height="1" fill="#f0f4fc"/><rect x="11" y="4" width="1" height="1" fill="#9aa8c0"/><rect x="13" y="4" width="1" height="1" fill="#9aa8c0"/><rect x="14" y="4" width="2" height="1" fill="#f0f4fc"/><rect x="16" y="4" width="1" height="1" fill="#9aa8c0"/><rect x="1" y="5" width="4" height="1" fill="#9aa8c0"/><rect x="5" y="5" width="1" height="1" fill="#f0f4fc"/><rect x="6" y="5" width="1" height="1" fill="#9aa8c0"/><rect x="8" y="5" width="1" height="1" fill="#9aa8c0"/><rect x="9" y="5" width="1" height="1" fill="#f0f4fc"/><rect x="10" y="5" width="1" height="1" fill="#9aa8c0"/><rect x="14" y="5" width="1" height="1" fill="#9aa8c0"/><rect x="15" y="5" width="1" height="1" fill="#f0f4fc"/><rect x="16" y="5" width="1" height="1" fill="#9aa8c0"/><rect x="4" y="6" width="1" height="1" fill="#9aa8c0"/><rect x="5" y="6" width="1" height="1" fill="#f0f4fc"/><rect x="6" y="6" width="2" height="1" fill="#9aa8c0"/><rect x="8" y="6" width="1" height="1" fill="#f0f4fc"/><rect x="9" y="6" width="1" height="1" fill="#9aa8c0"/><rect x="15" y="6" width="2" height="1" fill="#9aa8c0"/><rect x="5" y="7" width="1" height="1" fill="#9aa8c0"/><rect x="6" y="7" width="2" height="1" fill="#f0f4fc"/><rect x="8" y="7" width="1" height="1" fill="#9aa8c0"/><rect x="5" y="8" width="1" height="1" fill="#9aa8c0"/><rect x="6" y="8" width="2" height="1" fill="#f0f4fc"/><rect x="8" y="8" width="1" height="1" fill="#9aa8c0"/><rect x="4" y="9" width="1" height="1" fill="#9aa8c0"/><rect x="5" y="9" width="1" height="1" fill="#f0f4fc"/><rect x="6" y="9" width="2" height="1" fill="#9aa8c0"/><rect x="8" y="9" width="1" height="1" fill="#f0f4fc"/><rect x="9" y="9" width="1" height="1" fill="#9aa8c0"/><rect x="3" y="10" width="1" height="1" fill="#9aa8c0"/><rect x="4" y="10" width="1" height="1" fill="#f0f4fc"/><rect x="5" y="10" width="1" height="1" fill="#9aa8c0"/><rect x="8" y="10" width="1" height="1" fill="#9aa8c0"/><rect x="9" y="10" width="1" height="1" fill="#f0f4fc"/><rect x="10" y="10" width="1" height="1" fill="#9aa8c0"/><rect x="2" y="11" width="1" height="1" fill="#9aa8c0"/><rect x="3" y="11" width="1" height="1" fill="#f0f4fc"/><rect x="4" y="11" width="1" height="1" fill="#9aa8c0"/><rect x="9" y="11" width="1" height="1" fill="#9aa8c0"/><rect x="10" y="11" width="1" height="1" fill="#f0f4fc"/><rect x="11" y="11" width="1" height="1" fill="#9aa8c0"/><rect x="1" y="12" width="1" height="1" fill="#9aa8c0"/><rect x="2" y="12" width="1" height="1" fill="#f0f4fc"/><rect x="3" y="12" width="1" height="1" fill="#9aa8c0"/><rect x="10" y="12" width="1" height="1" fill="#9aa8c0"/><rect x="11" y="12" width="1" height="1" fill="#f0f4fc"/><rect x="12" y="12" width="1" height="1" fill="#9aa8c0"/><rect x="0" y="13" width="1" height="1" fill="#9aa8c0"/><rect x="1" y="13" width="1" height="1" fill="#f0f4fc"/><rect x="2" y="13" width="1" height="1" fill="#9aa8c0"/><rect x="11" y="13" width="1" height="1" fill="#9aa8c0"/><rect x="12" y="13" width="1" height="1" fill="#f0f4fc"/><rect x="13" y="13" width="1" height="1" fill="#9aa8c0"/><rect x="1" y="14" width="1" height="1" fill="#9aa8c0"/><rect x="12" y="14" width="2" height="1" fill="#9aa8c0"/></svg><svg class="a" style="left:450px;top:52px" width="15" height="15"><circle cx="7.5" cy="7.5" r="6.8" fill="#fff" stroke="#5a80b8" stroke-width="1.2"/><circle cx="7.5" cy="7.5" r="5" fill="#1850d8"/><path d="M5.3 5.6 Q5.5 3.4 7.6 3.4 Q9.8 3.5 9.6 5.5 Q9.4 6.8 7.6 7.6 L7.5 9.3" stroke="#fff" stroke-width="1.6" fill="none"/><rect x="6.7" y="10.2" width="1.7" height="1.6" fill="#fff"/></svg></div>
<div class="a " style="left:475px;top:51px;width:180px;height:17px;background:#d4d0c8;"></div>
<div class="a t" style="left:479px;top:55px;line-height:12px;font-size:11px;color:#000;letter-spacing:-0.069px;">Ln 28, Col 1</div>
<div class="a " style="left:4px;top:73px;width:207px;height:15px;background:#808080;"></div>
<div class="a t" style="left:5px;top:74px;line-height:12px;font-size:11px;color:#d4d0c8;font-weight:bold;letter-spacing:0.320px;">Project - VBAProject</div>
<div class="a " style="left:197px;top:74px;width:13px;height:13px;background:#d4d0c8;box-shadow:inset 1px 1px #fff,inset -1px -1px #404040,inset -2px -2px #808080;"></div>
<svg class="a" style="left:199px;top:76px" width="8" height="7" shape-rendering="crispEdges" fill="#000"><rect x="0" y="0" width="2" height="1"/><rect x="6" y="0" width="2" height="1"/><rect x="1" y="1" width="2" height="1"/><rect x="5" y="1" width="2" height="1"/><rect x="2" y="2" width="4" height="1"/><rect x="3" y="3" width="2" height="1"/><rect x="2" y="4" width="4" height="1"/><rect x="1" y="5" width="2" height="1"/><rect x="5" y="5" width="2" height="1"/><rect x="0" y="6" width="2" height="1"/><rect x="6" y="6" width="2" height="1"/></svg>
<div class="a " style="left:4px;top:88px;width:207px;height:1px;background:#d4d0c8;"></div>
<div class="a " style="left:4px;top:89px;width:207px;height:26px;background:#bedafc;"></div>
<div class="a " style="left:7px;top:90px;width:204px;height:25px;border-radius:3px;background:linear-gradient(to bottom,#e3efff 0%,#d6e7fd 45%,#b9d5fa 80%,#a3c4f3 100%);box-shadow:inset 0 -1px #6f99dc;"></div>
<div class="a " style="left:200px;top:90px;width:11px;height:25px;border-radius:0 3px 3px 0;background:linear-gradient(to bottom,#c2dcfc,#7aa5e5);box-shadow:inset 0 -1px #5d87c9;"></div>
<svg class="a" style="left:203px;top:105px" width="6" height="7"><path d="M0 0h5v1h-5z M0 3h5l-2.5 3z" fill="#000"/></svg>
<div class="a " style="left:57px;top:95px;width:1px;height:17px;background:#8cb0e8;box-shadow:1px 0 #fff;"></div>
<div class="a " style="left:61px;top:91px;width:23px;height:22px;background:linear-gradient(#fccf8e,#f9a556);border:1px solid #f59f4c;"></div>
<div class="a" style="left:0;top:0"><svg class="a" style="left:13px;top:96px" width="15" height="12"><rect x="0.5" y="0.5" width="14" height="11" fill="#f4f6fc" stroke="#4a5c8c"/><rect x="1" y="1" width="13" height="2" fill="#5080e0"/><rect x="1" y="3" width="2" height="9" fill="#a8b8d8"/><path d="M4 5.5h3M9 5.5h3M9 9.5h3" stroke="#f05020" stroke-width="1"/><path d="M4 7.5h3M9 7.5h3M4 9.5h3" stroke="#6880b0"/></svg><svg class="a" style="left:35px;top:96px" width="16" height="13"><rect x="0.5" y="0.5" width="15" height="12" fill="#f4f6fc" stroke="#4a5c8c"/><rect x="1" y="1" width="14" height="2" fill="#5080e0"/><path d="M3 5.5h3M3 9.5h3" stroke="#404040"/><rect x="7.5" y="4.5" width="6" height="2.5" fill="#fff" stroke="#303030"/><rect x="7.5" y="8.5" width="6" height="2.5" fill="#fff" stroke="#303030"/></svg><svg class="a" style="left:64px;top:96px" width="16" height="12"><path d="M0.5 1.5h5l1 1.5h8.5v8.5h-14.5z" fill="#f8d870" stroke="#403818"/><path d="M1 4h14v7h-14z" fill="#e8b838"/><path d="M1 4h14" stroke="#fff0b0"/></svg></div>
<div class="a " style="left:4px;top:117px;width:207px;height:713px;background:#fff;box-shadow:inset 1px 1px #808080,inset -1px -1px #fff,inset 2px 2px #404040,inset -2px -2px #d4d0c8;"></div>
<div class="a " style="left:82px;top:151px;width:75px;height:16px;background:#d4d0c8;"></div>
<div class="a t" style="left:46px;top:121px;line-height:12px;font-size:11px;color:#000;font-weight:bold;letter-spacing:0.424px;">VBAProject (задание 2.xls)</div>
<div class="a t" style="left:64px;top:137px;line-height:12px;font-size:11px;color:#000;letter-spacing:-0.127px;">Microsoft Excel Objects</div>
<div class="a t" style="left:84px;top:153px;line-height:12px;font-size:11px;color:#000;letter-spacing:0.044px;">Лист1 (Лист1)</div>
<div class="a t" style="left:84px;top:169px;line-height:12px;font-size:11px;color:#000;letter-spacing:0.044px;">Лист2 (Лист2)</div>
<div class="a t" style="left:84px;top:185px;line-height:12px;font-size:11px;color:#000;letter-spacing:0.044px;">Лист3 (Лист3)</div>
<div class="a t" style="left:84px;top:201px;line-height:12px;font-size:11px;color:#000;letter-spacing:0.129px;">ЭтаКнига</div>
<div class="a" style="left:0;top:0"><svg class="a" style="left:10px;top:123px" width="9" height="9" shape-rendering="crispEdges"><rect x="0.5" y="0.5" width="8" height="8" fill="#fff" stroke="#808080"/><path d="M2 4.5h5" stroke="#000"/></svg><svg class="a" style="left:20px;top:127px" width="5" height="1" shape-rendering="crispEdges"><rect x="0" y="0" width="1" height="1" fill="#808080"/><rect x="2" y="0" width="1" height="1" fill="#808080"/><rect x="4" y="0" width="1" height="1" fill="#808080"/></svg><svg class="a" style="left:25px;top:119px" width="16" height="15" shape-rendering="crispEdges"><rect x="11" y="0" width="1" height="1" fill="#000"/><rect x="12" y="0" width="2" height="1" fill="#00ff00"/><rect x="14" y="0" width="1" height="1" fill="#000"/><rect x="3" y="1" width="2" height="1" fill="#000"/><rect x="12" y="1" width="1" height="1" fill="#000"/><rect x="13" y="1" width="1" height="1" fill="#00ff00"/><rect x="14" y="1" width="1" height="1" fill="#000"/><rect x="3" y="2" width="1" height="1" fill="#000"/><rect x="4" y="2" width="1" height="1" fill="#00ffff"/><rect x="5" y="2" width="1" height="1" fill="#000"/><rect x="13" y="2" width="1" height="1" fill="#000"/><rect x="3" y="3" width="1" height="1" fill="#000"/><rect x="4" y="3" width="1" height="1" fill="#fff"/><rect x="5" y="3" width="1" height="1" fill="#00ffff"/><rect x="6" y="3" width="3" height="1" fill="#000"/><rect x="11" y="3" width="1" height="1" fill="#000"/><rect x="12" y="3" width="2" height="1" fill="#ffff00"/><rect x="14" y="3" width="1" height="1" fill="#000"/><rect x="3" y="4" width="1" height="1" fill="#000"/><rect x="4" y="4" width="1" height="1" fill="#fff"/><rect x="5" y="4" width="1" height="1" fill="#000"/><rect x="6" y="4" width="2" height="1" fill="#00ffff"/><rect x="8" y="4" width="1" height="1" fill="#000"/><rect x="10" y="4" width="1" height="1" fill="#000"/><rect x="11" y="4" width="2" height="1" fill="#ffff00"/><rect x="13" y="4" width="1" height="1" fill="#000"/><rect x="3" y="5" width="2" height="1" fill="#000"/><rect x="5" y="5" width="1" height="1" fill="#fff"/><rect x="6" y="5" width="2" height="1" fill="#000"/><rect x="8" y="5" width="1" height="1" fill="#00ffff"/><rect x="9" y="5" width="1" height="1" fill="#000"/><rect x="11" y="5" width="1" height="1" fill="#000"/><rect x="12" y="5" width="1" height="1" fill="#ff00ff"/><rect x="13" y="5" width="1" height="1" fill="#000"/><rect x="4" y="6" width="1" height="1" fill="#000"/><rect x="5" y="6" width="1" height="1" fill="#fff"/><rect x="6" y="6" width="1" height="1" fill="#000"/><rect x="7" y="6" width="2" height="1" fill="#00ffff"/><rect x="9" y="6" width="3" height="1" fill="#000"/><rect x="12" y="6" width="1" height="1" fill="#ff00ff"/><rect x="13" y="6" width="1" height="1" fill="#000"/><rect x="4" y="7" width="2" height="1" fill="#000"/><rect x="6" y="7" width="1" height="1" fill="#fff"/><rect x="7" y="7" width="2" height="1" fill="#000"/><rect x="9" y="7" width="1" height="1" fill="#00ffff"/><rect x="10" y="7" width="4" height="1" fill="#000"/><rect x="3" y="8" width="1" height="1" fill="#000"/><rect x="5" y="8" width="2" height="1" fill="#000"/><rect x="7" y="8" width="2" height="1" fill="#fff"/><rect x="9" y="8" width="1" height="1" fill="#000"/><rect x="10" y="8" width="2" height="1" fill="#00ffff"/><rect x="13" y="8" width="1" height="1" fill="#000"/><rect x="2" y="9" width="1" height="1" fill="#000"/><rect x="6" y="9" width="2" height="1" fill="#000"/><rect x="8" y="9" width="2" height="1" fill="#fff"/><rect x="10" y="9" width="1" height="1" fill="#000"/><rect x="11" y="9" width="2" height="1" fill="#00ffff"/><rect x="13" y="9" width="2" height="1" fill="#000"/><rect x="1" y="10" width="1" height="1" fill="#000"/><rect x="7" y="10" width="2" height="1" fill="#000"/><rect x="9" y="10" width="2" height="1" fill="#fff"/><rect x="11" y="10" width="2" height="1" fill="#00ffff"/><rect x="13" y="10" width="3" height="1" fill="#000"/><rect x="0" y="11" width="1" height="1" fill="#000"/><rect x="2" y="11" width="1" height="1" fill="#000"/><rect x="9" y="11" width="3" height="1" fill="#fff"/><rect x="12" y="11" width="2" height="1" fill="#000"/><rect x="2" y="12" width="2" height="1" fill="#000"/><rect x="11" y="12" width="2" height="1" fill="#000"/><rect x="4" y="13" width="2" height="1" fill="#000"/><rect x="9" y="13" width="2" height="1" fill="#000"/><rect x="6" y="14" width="3" height="1" fill="#000"/></svg><svg class="a" style="left:33px;top:134px" width="1" height="5" shape-rendering="crispEdges"><rect x="0" y="0" width="1" height="1" fill="#808080"/><rect x="0" y="2" width="1" height="1" fill="#808080"/><rect x="0" y="4" width="1" height="1" fill="#808080"/></svg><svg class="a" style="left:29px;top:139px" width="9" height="9" shape-rendering="crispEdges"><rect x="0.5" y="0.5" width="8" height="8" fill="#fff" stroke="#808080"/><path d="M2 4.5h5" stroke="#000"/></svg><svg class="a" style="left:39px;top:143px" width="6" height="1" shape-rendering="crispEdges"><rect x="0" y="0" width="1" height="1" fill="#808080"/><rect x="2" y="0" width="1" height="1" fill="#808080"/><rect x="4" y="0" width="1" height="1" fill="#808080"/></svg><svg class="a" style="left:45px;top:137px" width="16" height="12" shape-rendering="crispEdges"><rect x="3" y="0" width="5" height="1" fill="#808080"/><rect x="2" y="1" width="1" height="1" fill="#808080"/><rect x="3" y="1" width="1" height="1" fill="#fff"/><rect x="4" y="1" width="1" height="1" fill="#ffff00"/><rect x="5" y="1" width="1" height="1" fill="#fff"/><rect x="6" y="1" width="1" height="1" fill="#ffff00"/><rect x="7" y="1" width="1" height="1" fill="#fff"/><rect x="8" y="1" width="7" height="1" fill="#808080"/><rect x="2" y="2" width="1" height="1" fill="#808080"/><rect x="3" y="2" width="1" height="1" fill="#ffff00"/><rect x="4" y="2" width="1" height="1" fill="#fff"/><rect x="5" y="2" width="1" height="1" fill="#ffff00"/><rect x="6" y="2" width="1" height="1" fill="#fff"/><rect x="7" y="2" width="1" height="1" fill="#ffff00"/><rect x="8" y="2" width="1" height="1" fill="#fff"/><rect x="9" y="2" width="1" height="1" fill="#ffff00"/><rect x="10" y="2" width="1" height="1" fill="#fff"/><rect x="11" y="2" width="1" height="1" fill="#ffff00"/><rect x="12" y="2" width="1" height="1" fill="#fff"/><rect x="13" y="2" width="1" height="1" fill="#ffff00"/><rect x="14" y="2" width="1" height="1" fill="#808080"/><rect x="2" y="3" width="1" height="1" fill="#808080"/><rect x="3" y="3" width="1" height="1" fill="#fff"/><rect x="4" y="3" width="1" height="1" fill="#ffff00"/><rect x="5" y="3" width="1" height="1" fill="#fff"/><rect x="6" y="3" width="1" height="1" fill="#ffff00"/><rect x="7" y="3" width="1" height="1" fill="#fff"/><rect x="8" y="3" width="1" height="1" fill="#ffff00"/><rect x="9" y="3" width="1" height="1" fill="#fff"/><rect x="10" y="3" width="1" height="1" fill="#ffff00"/><rect x="11" y="3" width="1" height="1" fill="#fff"/><rect x="12" y="3" width="1" height="1" fill="#ffff00"/><rect x="13" y="3" width="1" height="1" fill="#fff"/><rect x="14" y="3" width="1" height="1" fill="#808080"/><rect x="2" y="4" width="1" height="1" fill="#808080"/><rect x="3" y="4" width="1" height="1" fill="#ffff00"/><rect x="4" y="4" width="1" height="1" fill="#fff"/><rect x="5" y="4" width="1" height="1" fill="#ffff00"/><rect x="6" y="4" width="1" height="1" fill="#fff"/><rect x="7" y="4" width="1" height="1" fill="#ffff00"/><rect x="8" y="4" width="1" height="1" fill="#fff"/><rect x="9" y="4" width="1" height="1" fill="#ffff00"/><rect x="10" y="4" width="1" height="1" fill="#fff"/><rect x="11" y="4" width="1" height="1" fill="#ffff00"/><rect x="12" y="4" width="1" height="1" fill="#fff"/><rect x="13" y="4" width="1" height="1" fill="#ffff00"/><rect x="14" y="4" width="1" height="1" fill="#808080"/><rect x="0" y="5" width="12" height="1" fill="#808080"/><rect x="12" y="5" width="2" height="1" fill="#000"/><rect x="14" y="5" width="1" height="1" fill="#808080"/><rect x="0" y="6" width="1" height="1" fill="#808080"/><rect x="1" y="6" width="11" height="1" fill="#fff"/><rect x="12" y="6" width="1" height="1" fill="#000"/><rect x="13" y="6" width="1" height="1" fill="#ffff00"/><rect x="14" y="6" width="1" height="1" fill="#808080"/><rect x="1" y="7" width="1" height="1" fill="#808080"/><rect x="2" y="7" width="1" height="1" fill="#ffff00"/><rect x="3" y="7" width="1" height="1" fill="#fff"/><rect x="4" y="7" width="1" height="1" fill="#ffff00"/><rect x="5" y="7" width="1" height="1" fill="#fff"/><rect x="6" y="7" width="1" height="1" fill="#ffff00"/><rect x="7" y="7" width="1" height="1" fill="#fff"/><rect x="8" y="7" width="1" height="1" fill="#ffff00"/><rect x="9" y="7" width="1" height="1" fill="#fff"/><rect x="10" y="7" width="1" height="1" fill="#ffff00"/><rect x="11" y="7" width="1" height="1" fill="#fff"/><rect x="12" y="7" width="2" height="1" fill="#000"/><rect x="14" y="7" width="1" height="1" fill="#808080"/><rect x="1" y="8" width="1" height="1" fill="#808080"/><rect x="2" y="8" width="1" height="1" fill="#fff"/><rect x="3" y="8" width="1" height="1" fill="#ffff00"/><rect x="4" y="8" width="1" height="1" fill="#fff"/><rect x="5" y="8" width="1" height="1" fill="#ffff00"/><rect x="6" y="8" width="1" height="1" fill="#fff"/><rect x="7" y="8" width="1" height="1" fill="#ffff00"/><rect x="8" y="8" width="1" height="1" fill="#fff"/><rect x="9" y="8" width="1" height="1" fill="#ffff00"/><rect x="10" y="8" width="1" height="1" fill="#fff"/><rect x="11" y="8" width="1" height="1" fill="#ffff00"/><rect x="12" y="8" width="2" height="1" fill="#000"/><rect x="14" y="8" width="1" height="1" fill="#808080"/><rect x="1" y="9" width="1" height="1" fill="#808080"/><rect x="2" y="9" width="1" height="1" fill="#ffff00"/><rect x="3" y="9" width="1" height="1" fill="#fff"/><rect x="4" y="9" width="1" height="1" fill="#ffff00"/><rect x="5" y="9" width="1" height="1" fill="#fff"/><rect x="6" y="9" width="1" height="1" fill="#ffff00"/><rect x="7" y="9" width="1" height="1" fill="#fff"/><rect x="8" y="9" width="1" height="1" fill="#ffff00"/><rect x="9" y="9" width="1" height="1" fill="#fff"/><rect x="10" y="9" width="1" height="1" fill="#ffff00"/><rect x="11" y="9" width="1" height="1" fill="#fff"/><rect x="12" y="9" width="1" height="1" fill="#ffff00"/><rect x="13" y="9" width="1" height="1" fill="#000"/><rect x="14" y="9" width="1" height="1" fill="#808080"/><rect x="1" y="10" width="1" height="1" fill="#808080"/><rect x="2" y="10" width="1" height="1" fill="#fff"/><rect x="3" y="10" width="1" height="1" fill="#ffff00"/><rect x="4" y="10" width="1" height="1" fill="#fff"/><rect x="5" y="10" width="1" height="1" fill="#ffff00"/><rect x="6" y="10" width="1" height="1" fill="#fff"/><rect x="7" y="10" width="1" height="1" fill="#ffff00"/><rect x="8" y="10" width="1" height="1" fill="#fff"/><rect x="9" y="10" width="1" height="1" fill="#ffff00"/><rect x="10" y="10" width="1" height="1" fill="#fff"/><rect x="11" y="10" width="1" height="1" fill="#ffff00"/><rect x="12" y="10" width="1" height="1" fill="#fff"/><rect x="13" y="10" width="1" height="1" fill="#000"/><rect x="14" y="10" width="1" height="1" fill="#808080"/><rect x="1" y="11" width="14" height="1" fill="#808080"/></svg><svg class="a" style="left:52px;top:150px" width="1" height="58" shape-rendering="crispEdges"><rect x="0" y="0" width="1" height="1" fill="#808080"/><rect x="0" y="2" width="1" height="1" fill="#808080"/><rect x="0" y="4" width="1" height="1" fill="#808080"/><rect x="0" y="6" width="1" height="1" fill="#808080"/><rect x="0" y="8" width="1" height="1" fill="#808080"/><rect x="0" y="10" width="1" height="1" fill="#808080"/><rect x="0" y="12" width="1" height="1" fill="#808080"/><rect x="0" y="14" width="1" height="1" fill="#808080"/><rect x="0" y="16" width="1" height="1" fill="#808080"/><rect x="0" y="18" width="1" height="1" fill="#808080"/><rect x="0" y="20" width="1" height="1" fill="#808080"/><rect x="0" y="22" width="1" height="1" fill="#808080"/><rect x="0" y="24" width="1" height="1" fill="#808080"/><rect x="0" y="26" width="1" height="1" fill="#808080"/><rect x="0" y="28" width="1" height="1" fill="#808080"/><rect x="0" y="30" width="1" height="1" fill="#808080"/><rect x="0" y="32" width="1" height="1" fill="#808080"/><rect x="0" y="34" width="1" height="1" fill="#808080"/><rect x="0" y="36" width="1" height="1" fill="#808080"/><rect x="0" y="38" width="1" height="1" fill="#808080"/><rect x="0" y="40" width="1" height="1" fill="#808080"/><rect x="0" y="42" width="1" height="1" fill="#808080"/><rect x="0" y="44" width="1" height="1" fill="#808080"/><rect x="0" y="46" width="1" height="1" fill="#808080"/><rect x="0" y="48" width="1" height="1" fill="#808080"/><rect x="0" y="50" width="1" height="1" fill="#808080"/><rect x="0" y="52" width="1" height="1" fill="#808080"/><rect x="0" y="54" width="1" height="1" fill="#808080"/><rect x="0" y="56" width="1" height="1" fill="#808080"/></svg><svg class="a" style="left:54px;top:159px" width="10" height="1" shape-rendering="crispEdges"><rect x="0" y="0" width="1" height="1" fill="#808080"/><rect x="2" y="0" width="1" height="1" fill="#808080"/><rect x="4" y="0" width="1" height="1" fill="#808080"/><rect x="6" y="0" width="1" height="1" fill="#808080"/><rect x="8" y="0" width="1" height="1" fill="#808080"/></svg><svg class="a" style="left:64px;top:152px" width="15" height="14" shape-rendering="crispEdges"><rect x="3" y="0" width="8" height="1" fill="#808080"/><rect x="11" y="0" width="1" height="1" fill="#000"/><rect x="3" y="1" width="1" height="1" fill="#808080"/><rect x="4" y="1" width="7" height="1" fill="#fff"/><rect x="11" y="1" width="2" height="1" fill="#000"/><rect x="0" y="2" width="10" height="1" fill="#000"/><rect x="10" y="2" width="1" height="1" fill="#fff"/><rect x="11" y="2" width="1" height="1" fill="#000"/><rect x="12" y="2" width="1" height="1" fill="#fff"/><rect x="13" y="2" width="1" height="1" fill="#000"/><rect x="0" y="3" width="1" height="1" fill="#000"/><rect x="1" y="3" width="2" height="1" fill="#fff"/><rect x="3" y="3" width="1" height="1" fill="#000"/><rect x="4" y="3" width="2" height="1" fill="#fff"/><rect x="6" y="3" width="1" height="1" fill="#000"/><rect x="7" y="3" width="2" height="1" fill="#fff"/><rect x="9" y="3" width="1" height="1" fill="#000"/><rect x="10" y="3" width="1" height="1" fill="#fff"/><rect x="11" y="3" width="4" height="1" fill="#000"/><rect x="0" y="4" width="10" height="1" fill="#000"/><rect x="10" y="4" width="4" height="1" fill="#fff"/><rect x="14" y="4" width="1" height="1" fill="#000"/><rect x="0" y="5" width="1" height="1" fill="#000"/><rect x="1" y="5" width="2" height="1" fill="#fff"/><rect x="3" y="5" width="1" height="1" fill="#000"/><rect x="4" y="5" width="2" height="1" fill="#fff"/><rect x="6" y="5" width="1" height="1" fill="#000"/><rect x="7" y="5" width="2" height="1" fill="#fff"/><rect x="9" y="5" width="1" height="1" fill="#000"/><rect x="10" y="5" width="4" height="1" fill="#fff"/><rect x="14" y="5" width="1" height="1" fill="#000"/><rect x="0" y="6" width="10" height="1" fill="#000"/><rect x="10" y="6" width="4" height="1" fill="#fff"/><rect x="14" y="6" width="1" height="1" fill="#000"/><rect x="0" y="7" width="1" height="1" fill="#000"/><rect x="1" y="7" width="2" height="1" fill="#fff"/><rect x="3" y="7" width="1" height="1" fill="#000"/><rect x="4" y="7" width="2" height="1" fill="#fff"/><rect x="6" y="7" width="1" height="1" fill="#000"/><rect x="7" y="7" width="2" height="1" fill="#fff"/><rect x="9" y="7" width="1" height="1" fill="#000"/><rect x="10" y="7" width="4" height="1" fill="#fff"/><rect x="14" y="7" width="1" height="1" fill="#000"/><rect x="0" y="8" width="10" height="1" fill="#000"/><rect x="10" y="8" width="4" height="1" fill="#fff"/><rect x="14" y="8" width="1" height="1" fill="#000"/><rect x="0" y="9" width="1" height="1" fill="#000"/><rect x="1" y="9" width="2" height="1" fill="#fff"/><rect x="3" y="9" width="1" height="1" fill="#000"/><rect x="4" y="9" width="2" height="1" fill="#fff"/><rect x="6" y="9" width="1" height="1" fill="#000"/><rect x="7" y="9" width="2" height="1" fill="#fff"/><rect x="9" y="9" width="1" height="1" fill="#000"/><rect x="10" y="9" width="4" height="1" fill="#fff"/><rect x="14" y="9" width="1" height="1" fill="#000"/><rect x="0" y="10" width="10" height="1" fill="#000"/><rect x="10" y="10" width="4" height="1" fill="#fff"/><rect x="14" y="10" width="1" height="1" fill="#000"/><rect x="3" y="11" width="1" height="1" fill="#808080"/><rect x="4" y="11" width="10" height="1" fill="#fff"/><rect x="14" y="11" width="1" height="1" fill="#000"/><rect x="3" y="12" width="1" height="1" fill="#808080"/><rect x="4" y="12" width="10" height="1" fill="#fff"/><rect x="14" y="12" width="1" height="1" fill="#000"/><rect x="3" y="13" width="12" height="1" fill="#000"/></svg><svg class="a" style="left:54px;top:175px" width="10" height="1" shape-rendering="crispEdges"><rect x="0" y="0" width="1" height="1" fill="#808080"/><rect x="2" y="0" width="1" height="1" fill="#808080"/><rect x="4" y="0" width="1" height="1" fill="#808080"/><rect x="6" y="0" width="1" height="1" fill="#808080"/><rect x="8" y="0" width="1" height="1" fill="#808080"/></svg><svg class="a" style="left:64px;top:168px" width="15" height="14" shape-rendering="crispEdges"><rect x="3" y="0" width="8" height="1" fill="#808080"/><rect x="11" y="0" width="1" height="1" fill="#000"/><rect x="3" y="1" width="1" height="1" fill="#808080"/><rect x="4" y="1" width="7" height="1" fill="#fff"/><rect x="11" y="1" width="2" height="1" fill="#000"/><rect x="0" y="2" width="10" height="1" fill="#000"/><rect x="10" y="2" width="1" height="1" fill="#fff"/><rect x="11" y="2" width="1" height="1" fill="#000"/><rect x="12" y="2" width="1" height="1" fill="#fff"/><rect x="13" y="2" width="1" height="1" fill="#000"/><rect x="0" y="3" width="1" height="1" fill="#000"/><rect x="1" y="3" width="2" height="1" fill="#fff"/><rect x="3" y="3" width="1" height="1" fill="#000"/><rect x="4" y="3" width="2" height="1" fill="#fff"/><rect x="6" y="3" width="1" height="1" fill="#000"/><rect x="7" y="3" width="2" height="1" fill="#fff"/><rect x="9" y="3" width="1" height="1" fill="#000"/><rect x="10" y="3" width="1" height="1" fill="#fff"/><rect x="11" y="3" width="4" height="1" fill="#000"/><rect x="0" y="4" width="10" height="1" fill="#000"/><rect x="10" y="4" width="4" height="1" fill="#fff"/><rect x="14" y="4" width="1" height="1" fill="#000"/><rect x="0" y="5" width="1" height="1" fill="#000"/><rect x="1" y="5" width="2" height="1" fill="#fff"/><rect x="3" y="5" width="1" height="1" fill="#000"/><rect x="4" y="5" width="2" height="1" fill="#fff"/><rect x="6" y="5" width="1" height="1" fill="#000"/><rect x="7" y="5" width="2" height="1" fill="#fff"/><rect x="9" y="5" width="1" height="1" fill="#000"/><rect x="10" y="5" width="4" height="1" fill="#fff"/><rect x="14" y="5" width="1" height="1" fill="#000"/><rect x="0" y="6" width="10" height="1" fill="#000"/><rect x="10" y="6" width="4" height="1" fill="#fff"/><rect x="14" y="6" width="1" height="1" fill="#000"/><rect x="0" y="7" width="1" height="1" fill="#000"/><rect x="1" y="7" width="2" height="1" fill="#fff"/><rect x="3" y="7" width="1" height="1" fill="#000"/><rect x="4" y="7" width="2" height="1" fill="#fff"/><rect x="6" y="7" width="1" height="1" fill="#000"/><rect x="7" y="7" width="2" height="1" fill="#fff"/><rect x="9" y="7" width="1" height="1" fill="#000"/><rect x="10" y="7" width="4" height="1" fill="#fff"/><rect x="14" y="7" width="1" height="1" fill="#000"/><rect x="0" y="8" width="10" height="1" fill="#000"/><rect x="10" y="8" width="4" height="1" fill="#fff"/><rect x="14" y="8" width="1" height="1" fill="#000"/><rect x="0" y="9" width="1" height="1" fill="#000"/><rect x="1" y="9" width="2" height="1" fill="#fff"/><rect x="3" y="9" width="1" height="1" fill="#000"/><rect x="4" y="9" width="2" height="1" fill="#fff"/><rect x="6" y="9" width="1" height="1" fill="#000"/><rect x="7" y="9" width="2" height="1" fill="#fff"/><rect x="9" y="9" width="1" height="1" fill="#000"/><rect x="10" y="9" width="4" height="1" fill="#fff"/><rect x="14" y="9" width="1" height="1" fill="#000"/><rect x="0" y="10" width="10" height="1" fill="#000"/><rect x="10" y="10" width="4" height="1" fill="#fff"/><rect x="14" y="10" width="1" height="1" fill="#000"/><rect x="3" y="11" width="1" height="1" fill="#808080"/><rect x="4" y="11" width="10" height="1" fill="#fff"/><rect x="14" y="11" width="1" height="1" fill="#000"/><rect x="3" y="12" width="1" height="1" fill="#808080"/><rect x="4" y="12" width="10" height="1" fill="#fff"/><rect x="14" y="12" width="1" height="1" fill="#000"/><rect x="3" y="13" width="12" height="1" fill="#000"/></svg><svg class="a" style="left:54px;top:191px" width="10" height="1" shape-rendering="crispEdges"><rect x="0" y="0" width="1" height="1" fill="#808080"/><rect x="2" y="0" width="1" height="1" fill="#808080"/><rect x="4" y="0" width="1" height="1" fill="#808080"/><rect x="6" y="0" width="1" height="1" fill="#808080"/><rect x="8" y="0" width="1" height="1" fill="#808080"/></svg><svg class="a" style="left:64px;top:184px" width="15" height="14" shape-rendering="crispEdges"><rect x="3" y="0" width="8" height="1" fill="#808080"/><rect x="11" y="0" width="1" height="1" fill="#000"/><rect x="3" y="1" width="1" height="1" fill="#808080"/><rect x="4" y="1" width="7" height="1" fill="#fff"/><rect x="11" y="1" width="2" height="1" fill="#000"/><rect x="0" y="2" width="10" height="1" fill="#000"/><rect x="10" y="2" width="1" height="1" fill="#fff"/><rect x="11" y="2" width="1" height="1" fill="#000"/><rect x="12" y="2" width="1" height="1" fill="#fff"/><rect x="13" y="2" width="1" height="1" fill="#000"/><rect x="0" y="3" width="1" height="1" fill="#000"/><rect x="1" y="3" width="2" height="1" fill="#fff"/><rect x="3" y="3" width="1" height="1" fill="#000"/><rect x="4" y="3" width="2" height="1" fill="#fff"/><rect x="6" y="3" width="1" height="1" fill="#000"/><rect x="7" y="3" width="2" height="1" fill="#fff"/><rect x="9" y="3" width="1" height="1" fill="#000"/><rect x="10" y="3" width="1" height="1" fill="#fff"/><rect x="11" y="3" width="4" height="1" fill="#000"/><rect x="0" y="4" width="10" height="1" fill="#000"/><rect x="10" y="4" width="4" height="1" fill="#fff"/><rect x="14" y="4" width="1" height="1" fill="#000"/><rect x="0" y="5" width="1" height="1" fill="#000"/><rect x="1" y="5" width="2" height="1" fill="#fff"/><rect x="3" y="5" width="1" height="1" fill="#000"/><rect x="4" y="5" width="2" height="1" fill="#fff"/><rect x="6" y="5" width="1" height="1" fill="#000"/><rect x="7" y="5" width="2" height="1" fill="#fff"/><rect x="9" y="5" width="1" height="1" fill="#000"/><rect x="10" y="5" width="4" height="1" fill="#fff"/><rect x="14" y="5" width="1" height="1" fill="#000"/><rect x="0" y="6" width="10" height="1" fill="#000"/><rect x="10" y="6" width="4" height="1" fill="#fff"/><rect x="14" y="6" width="1" height="1" fill="#000"/><rect x="0" y="7" width="1" height="1" fill="#000"/><rect x="1" y="7" width="2" height="1" fill="#fff"/><rect x="3" y="7" width="1" height="1" fill="#000"/><rect x="4" y="7" width="2" height="1" fill="#fff"/><rect x="6" y="7" width="1" height="1" fill="#000"/><rect x="7" y="7" width="2" height="1" fill="#fff"/><rect x="9" y="7" width="1" height="1" fill="#000"/><rect x="10" y="7" width="4" height="1" fill="#fff"/><rect x="14" y="7" width="1" height="1" fill="#000"/><rect x="0" y="8" width="10" height="1" fill="#000"/><rect x="10" y="8" width="4" height="1" fill="#fff"/><rect x="14" y="8" width="1" height="1" fill="#000"/><rect x="0" y="9" width="1" height="1" fill="#000"/><rect x="1" y="9" width="2" height="1" fill="#fff"/><rect x="3" y="9" width="1" height="1" fill="#000"/><rect x="4" y="9" width="2" height="1" fill="#fff"/><rect x="6" y="9" width="1" height="1" fill="#000"/><rect x="7" y="9" width="2" height="1" fill="#fff"/><rect x="9" y="9" width="1" height="1" fill="#000"/><rect x="10" y="9" width="4" height="1" fill="#fff"/><rect x="14" y="9" width="1" height="1" fill="#000"/><rect x="0" y="10" width="10" height="1" fill="#000"/><rect x="10" y="10" width="4" height="1" fill="#fff"/><rect x="14" y="10" width="1" height="1" fill="#000"/><rect x="3" y="11" width="1" height="1" fill="#808080"/><rect x="4" y="11" width="10" height="1" fill="#fff"/><rect x="14" y="11" width="1" height="1" fill="#000"/><rect x="3" y="12" width="1" height="1" fill="#808080"/><rect x="4" y="12" width="10" height="1" fill="#fff"/><rect x="14" y="12" width="1" height="1" fill="#000"/><rect x="3" y="13" width="12" height="1" fill="#000"/></svg><svg class="a" style="left:54px;top:207px" width="8" height="1" shape-rendering="crispEdges"><rect x="0" y="0" width="1" height="1" fill="#808080"/><rect x="2" y="0" width="1" height="1" fill="#808080"/><rect x="4" y="0" width="1" height="1" fill="#808080"/><rect x="6" y="0" width="1" height="1" fill="#808080"/></svg><svg class="a" style="left:62px;top:199px" width="16" height="15" shape-rendering="crispEdges"><rect x="4" y="0" width="9" height="1" fill="#000"/><rect x="4" y="1" width="1" height="1" fill="#000"/><rect x="5" y="1" width="7" height="1" fill="#fff"/><rect x="12" y="1" width="2" height="1" fill="#000"/><rect x="4" y="2" width="1" height="1" fill="#000"/><rect x="5" y="2" width="7" height="1" fill="#fff"/><rect x="12" y="2" width="1" height="1" fill="#000"/><rect x="13" y="2" width="1" height="1" fill="#fff"/><rect x="14" y="2" width="1" height="1" fill="#000"/><rect x="4" y="3" width="1" height="1" fill="#000"/><rect x="5" y="3" width="7" height="1" fill="#fff"/><rect x="12" y="3" width="4" height="1" fill="#000"/><rect x="1" y="4" width="1" height="1" fill="#9c80a8"/><rect x="2" y="4" width="1" height="1" fill="#008000"/><rect x="4" y="4" width="1" height="1" fill="#000"/><rect x="5" y="4" width="2" height="1" fill="#fff"/><rect x="7" y="4" width="1" height="1" fill="#9c80a8"/><rect x="8" y="4" width="1" height="1" fill="#008000"/><rect x="9" y="4" width="6" height="1" fill="#fff"/><rect x="15" y="4" width="1" height="1" fill="#000"/><rect x="1" y="5" width="1" height="1" fill="#008000"/><rect x="2" y="5" width="1" height="1" fill="#fff"/><rect x="3" y="5" width="1" height="1" fill="#008000"/><rect x="4" y="5" width="1" height="1" fill="#000"/><rect x="5" y="5" width="1" height="1" fill="#fff"/><rect x="6" y="5" width="1" height="1" fill="#9c80a8"/><rect x="7" y="5" width="1" height="1" fill="#008000"/><rect x="8" y="5" width="1" height="1" fill="#9c80a8"/><rect x="9" y="5" width="6" height="1" fill="#fff"/><rect x="15" y="5" width="1" height="1" fill="#000"/><rect x="2" y="6" width="1" height="1" fill="#008000"/><rect x="3" y="6" width="1" height="1" fill="#fff"/><rect x="4" y="6" width="1" height="1" fill="#008000"/><rect x="5" y="6" width="1" height="1" fill="#9c80a8"/><rect x="6" y="6" width="1" height="1" fill="#008000"/><rect x="7" y="6" width="1" height="1" fill="#9c80a8"/><rect x="8" y="6" width="7" height="1" fill="#fff"/><rect x="15" y="6" width="1" height="1" fill="#000"/><rect x="3" y="7" width="1" height="1" fill="#008000"/><rect x="4" y="7" width="1" height="1" fill="#fff"/><rect x="5" y="7" width="1" height="1" fill="#008000"/><rect x="6" y="7" width="1" height="1" fill="#9c80a8"/><rect x="7" y="7" width="1" height="1" fill="#fff"/><rect x="8" y="7" width="1" height="1" fill="#9c80a8"/><rect x="9" y="7" width="1" height="1" fill="#008000"/><rect x="10" y="7" width="5" height="1" fill="#fff"/><rect x="15" y="7" width="1" height="1" fill="#000"/><rect x="2" y="8" width="1" height="1" fill="#008000"/><rect x="3" y="8" width="1" height="1" fill="#9c80a8"/><rect x="4" y="8" width="1" height="1" fill="#008000"/><rect x="5" y="8" width="1" height="1" fill="#fff"/><rect x="6" y="8" width="1" height="1" fill="#008000"/><rect x="7" y="8" width="1" height="1" fill="#9c80a8"/><rect x="8" y="8" width="1" height="1" fill="#008000"/><rect x="9" y="8" width="6" height="1" fill="#fff"/><rect x="15" y="8" width="1" height="1" fill="#000"/><rect x="1" y="9" width="1" height="1" fill="#008000"/><rect x="2" y="9" width="1" height="1" fill="#9c80a8"/><rect x="3" y="9" width="1" height="1" fill="#008000"/><rect x="4" y="9" width="1" height="1" fill="#9c80a8"/><rect x="5" y="9" width="2" height="1" fill="#fff"/><rect x="7" y="9" width="1" height="1" fill="#008000"/><rect x="8" y="9" width="7" height="1" fill="#fff"/><rect x="15" y="9" width="1" height="1" fill="#000"/><rect x="1" y="10" width="1" height="1" fill="#9c80a8"/><rect x="2" y="10" width="1" height="1" fill="#008000"/><rect x="3" y="10" width="1" height="1" fill="#9c80a8"/><rect x="4" y="10" width="1" height="1" fill="#000"/><rect x="5" y="10" width="3" height="1" fill="#fff"/><rect x="8" y="10" width="1" height="1" fill="#008000"/><rect x="9" y="10" width="6" height="1" fill="#fff"/><rect x="15" y="10" width="1" height="1" fill="#000"/><rect x="2" y="11" width="1" height="1" fill="#9c80a8"/><rect x="4" y="11" width="1" height="1" fill="#000"/><rect x="5" y="11" width="2" height="1" fill="#fff"/><rect x="7" y="11" width="1" height="1" fill="#008000"/><rect x="8" y="11" width="1" height="1" fill="#9c80a8"/><rect x="9" y="11" width="1" height="1" fill="#008000"/><rect x="10" y="11" width="5" height="1" fill="#fff"/><rect x="15" y="11" width="1" height="1" fill="#000"/><rect x="4" y="12" width="1" height="1" fill="#000"/><rect x="5" y="12" width="10" height="1" fill="#fff"/><rect x="15" y="12" width="1" height="1" fill="#000"/><rect x="4" y="13" width="1" height="1" fill="#000"/><rect x="5" y="13" width="10" height="1" fill="#fff"/><rect x="15" y="13" width="1" height="1" fill="#000"/><rect x="4" y="14" width="12" height="1" fill="#000"/></svg></div>
<div class="a " style="left:217px;top:73px;width:931px;height:495px;background:#d4d0c8;box-shadow:inset 1px 1px #808080,inset 2px 2px #404040,inset 3px 3px #f0eee8;"></div>
<div class="a " style="left:229px;top:78px;width:448px;height:21px;background:#fff;box-shadow:inset 1px 1px #808080,inset -1px -1px #fff,inset 2px 2px #404040,inset -2px -2px #d4d0c8;"></div>
<div class="a " style="left:658px;top:80px;width:17px;height:17px;background:#d4d0c8;box-shadow:inset 1px 1px #d4d0c8,inset -1px -1px #404040,inset 2px 2px #fff,inset -2px -2px #808080;"></div>
<svg class="a" style="left:663px;top:86px" width="7" height="4"><path d="M0 0h7l-3.5 4z" fill="#000"/></svg>
<div class="a t" style="left:232px;top:81px;line-height:12px;font-size:11px;color:#000;font-weight:bold;letter-spacing:0.300px;">(General)</div>
<div class="a " style="left:687px;top:78px;width:446px;height:21px;background:#fff;box-shadow:inset 1px 1px #808080,inset -1px -1px #fff,inset 2px 2px #404040,inset -2px -2px #d4d0c8;"></div>
<div class="a " style="left:1114px;top:80px;width:17px;height:17px;background:#d4d0c8;box-shadow:inset 1px 1px #d4d0c8,inset -1px -1px #404040,inset 2px 2px #fff,inset -2px -2px #808080;"></div>
<svg class="a" style="left:1119px;top:86px" width="7" height="4"><path d="M0 0h7l-3.5 4z" fill="#000"/></svg>
<div class="a t" style="left:690px;top:81px;line-height:12px;font-size:11px;color:#000;font-weight:bold;letter-spacing:0.271px;">Пример</div>
<div class="a " style="left:219px;top:101px;width:927px;height:468px;background:#fff;box-shadow:inset 1px 1px #808080,inset 2px 2px #404040,inset -1px -1px #fff,inset -2px -3px #d4d0c8;"></div>
<div class="a " style="left:1128px;top:550px;width:16px;height:16px;background:#d4d0c8;"></div>
<div class="a " style="left:221px;top:103px;width:20px;height:447px;background:#d4d0c8;"></div>
<div class="a " style="left:241px;top:103px;width:1px;height:447px;background:#000;"></div>
<div class="a" style="left:242px;top:103px;width:886px;height:445px;overflow:hidden"><div class="a mono" style="left:11px;top:3.5px"><span class="k">Dim</span> N, i <span class="k">As</span> <span class="k">Integer</span>
<span class="k">Dim</span> G() <span class="k">As</span> <span class="k">String</span>
<span class="k">Dim</span> P() <span class="k">As</span> <span class="k">Integer</span>
<span class="k">Dim</span> K() <span class="k">As</span> <span class="k">Single</span>
<span class="k">Dim</span> S() <span class="k">As</span> <span class="k">Single</span>
<span class="k">Dim</span> Sr() <span class="k">As</span> <span class="k">Single</span>
N = InputBox(&quot;количество обследуемых городов&quot;)
<span class="k">ReDim</span> G(N) <span class="k">As</span> <span class="k">String</span>
<span class="k">ReDim</span> P(N) <span class="k">As</span> <span class="k">Integer</span>
<span class="k">ReDim</span> K(N) <span class="k">As</span> <span class="k">Single</span>
<span class="k">ReDim</span> S(N) <span class="k">As</span> <span class="k">Single</span>
<span class="k">ReDim</span> Sr(N) <span class="k">As</span> <span class="k">Single</span>
<span class="k">For</span> i = 1 <span class="k">To</span> N
G(i) = InputBox(&quot;название города&quot;)
P(i) = InputBox(&quot;количество проданных квартир&quot;)
K(i) = InputBox(&quot;количество кв.м.&quot;)
S(i) = InputBox(&quot;сумма от проданых квартир&quot;)
<span class="k">Next</span>
<span class="k">For</span> i = 1 <span class="k">To</span> N
Sr(i) = S(i) / P(i)
<span class="k">Next</span>
<span class="k">Debug.Print</span> &quot;город&quot;; <span class="k">Tab(30)</span>; &quot;количество проданных квартир&quot;; <span class="k">Tab(50)</span>; &quot;количество кв.м.&quot;; <span class="k">Tab(70)</span>; &quot;средняя стоимость одной квартиры&quot;
<span class="k">For</span> i = 1 <span class="k">To</span> N
<span class="k">Debug.Print</span> G(i); <span class="k">Tab(30)</span>; P(i); <span class="k">Tab(50)</span>; K(i); <span class="k">Tab(70)</span>; Sr(i)
<span class="k">Next</span>
<span class="k">End Sub</span></div><div class="a" style="left:11px;top:418px;width:1px;height:16px;background:#000"></div></div>
<div class="a " style="left:1128px;top:103px;width:16px;height:7px;background:#d4d0c8;box-shadow:inset 1px 1px #fff,inset -1px -1px #404040,inset -2px -2px #808080;"></div>
<div class="a " style="left:1128px;top:110px;width:16px;height:16px;background:#d4d0c8;box-shadow:inset 1px 1px #d4d0c8,inset -1px -1px #404040,inset 2px 2px #fff,inset -2px -2px #808080;"></div>
<svg class="a" style="left:1132px;top:116px" width="7" height="4"><path d="M3.5 0l3.5 4h-7z" fill="#000"/></svg>
<div class="a check" style="left:1128px;top:126px;width:16px;height:15px;"></div>
<div class="a " style="left:1128px;top:141px;width:16px;height:394px;background:#d4d0c8;box-shadow:inset 1px 1px #d4d0c8,inset -1px -1px #404040,inset 2px 2px #fff,inset -2px -2px #808080;"></div>
<div class="a " style="left:1128px;top:535px;width:16px;height:15px;background:#d4d0c8;box-shadow:inset 1px 1px #d4d0c8,inset -1px -1px #404040,inset 2px 2px #fff,inset -2px -2px #808080;"></div>
<svg class="a" style="left:1132px;top:541px" width="7" height="4"><path d="M0 0h7l-3.5 4z" fill="#000"/></svg>
<div class="a " style="left:221px;top:550px;width:16px;height:16px;background:#d4d0c8;box-shadow:inset 1px 1px #d4d0c8,inset -1px -1px #404040,inset 2px 2px #fff,inset -2px -2px #808080;"></div>
<div class="a " style="left:237px;top:550px;width:16px;height:16px;background:#d4d0c8;box-shadow:inset 1px 1px #404040,inset -1px -1px #fff,inset 2px 2px #808080;"></div>
<div class="a " style="left:253px;top:550px;width:16px;height:16px;background:#d4d0c8;box-shadow:inset 1px 1px #d4d0c8,inset -1px -1px #404040,inset 2px 2px #fff,inset -2px -2px #808080;"></div>
<svg class="a" style="left:258px;top:554px" width="4" height="7"><path d="M0 3.5l4-3.5v7z" fill="#000"/></svg>
<div class="a " style="left:269px;top:550px;width:90px;height:16px;background:#d4d0c8;box-shadow:inset 1px 1px #d4d0c8,inset -1px -1px #404040,inset 2px 2px #fff,inset -2px -2px #808080;"></div>
<div class="a check" style="left:359px;top:550px;width:755px;height:16px;"></div>
<div class="a " style="left:1113px;top:550px;width:15px;height:16px;background:#d4d0c8;box-shadow:inset 1px 1px #d4d0c8,inset -1px -1px #404040,inset 2px 2px #fff,inset -2px -2px #808080;"></div>
<svg class="a" style="left:1119px;top:554px" width="4" height="7"><path d="M4 3.5l-4-3.5v7z" fill="#000"/></svg>
<div class="a " style="left:224px;top:553px;width:11px;height:5px;border-top:1px solid #000;border-bottom:1px solid #000;"></div>
<svg class="a" style="left:240px;top:553px" width="11" height="10" shape-rendering="crispEdges"><path d="M0 0h10v1h-10z M2 2h8v1h-8z M0 4h10v1h-10z M2 6h8v1h-8z M0 8h10v1h-10z" fill="#000"/></svg>
<div class="a " style="left:217px;top:576px;width:931px;height:15px;background:#808080;"></div>
<div class="a t" style="left:218px;top:577px;line-height:12px;font-size:11px;color:#d4d0c8;font-weight:bold;letter-spacing:0.842px;">Immediate</div>
<div class="a " style="left:1134px;top:577px;width:13px;height:13px;background:#d4d0c8;box-shadow:inset 1px 1px #fff,inset -1px -1px #404040,inset -2px -2px #808080;"></div>
<svg class="a" style="left:1136px;top:579px" width="8" height="7" shape-rendering="crispEdges" fill="#000"><rect x="0" y="0" width="2" height="1"/><rect x="6" y="0" width="2" height="1"/><rect x="1" y="1" width="2" height="1"/><rect x="5" y="1" width="2" height="1"/><rect x="2" y="2" width="4" height="1"/><rect x="3" y="3" width="2" height="1"/><rect x="2" y="4" width="4" height="1"/><rect x="1" y="5" width="2" height="1"/><rect x="5" y="5" width="2" height="1"/><rect x="0" y="6" width="2" height="1"/><rect x="6" y="6" width="2" height="1"/></svg>
<div class="a " style="left:217px;top:592px;width:931px;height:238px;background:#fff;box-shadow:inset 1px 1px #808080,inset -1px -1px #fff,inset 2px 2px #404040,inset -2px -2px #d4d0c8;"></div>
<div class="a mono" style="left:230px;top:598px">город                        количество проданных квартир
                                                 количество кв.м.    средняя стоимость одной квартиры
Мыски                         34                  2800                1231,471 
Кемерово                      12                  4800                3000 
Яшкино                        40                  5600                2225 </div>
<div class="a " style="left:1130px;top:594px;width:16px;height:15px;background:#d4d0c8;box-shadow:inset 1px 1px #d4d0c8,inset -1px -1px #404040,inset 2px 2px #fff,inset -2px -2px #808080;"></div>
<svg class="a" style="left:1134px;top:600px" width="7" height="4"><path d="M3.5 0l3.5 4h-7z" fill="#000"/></svg>
<div class="a " style="left:1130px;top:609px;width:16px;height:187px;background:#d4d0c8;box-shadow:inset 1px 1px #d4d0c8,inset -1px -1px #404040,inset 2px 2px #fff,inset -2px -2px #808080;"></div>
<div class="a check" style="left:1130px;top:796px;width:16px;height:1px;"></div>
<div class="a " style="left:1130px;top:797px;width:16px;height:16px;background:#d4d0c8;box-shadow:inset 1px 1px #d4d0c8,inset -1px -1px #404040,inset 2px 2px #fff,inset -2px -2px #808080;"></div>
<svg class="a" style="left:1134px;top:803px" width="7" height="4"><path d="M0 0h7l-3.5 4z" fill="#000"/></svg>
<div class="a " style="left:219px;top:813px;width:16px;height:15px;background:#d4d0c8;box-shadow:inset 1px 1px #d4d0c8,inset -1px -1px #404040,inset 2px 2px #fff,inset -2px -2px #808080;"></div>
<svg class="a" style="left:224px;top:816px" width="4" height="7"><path d="M0 3.5l4-3.5v7z" fill="#000"/></svg>
<div class="a " style="left:235px;top:813px;width:96px;height:15px;background:#d4d0c8;box-shadow:inset 1px 1px #d4d0c8,inset -1px -1px #404040,inset 2px 2px #fff,inset -2px -2px #808080;"></div>
<div class="a check" style="left:331px;top:813px;width:784px;height:15px;"></div>
<div class="a " style="left:1115px;top:813px;width:15px;height:15px;background:#d4d0c8;box-shadow:inset 1px 1px #d4d0c8,inset -1px -1px #404040,inset 2px 2px #fff,inset -2px -2px #808080;"></div>
<svg class="a" style="left:1121px;top:816px" width="4" height="7"><path d="M4 3.5l-4-3.5v7z" fill="#000"/></svg>
<div class="a " style="left:1130px;top:813px;width:16px;height:15px;background:#d4d0c8;"></div>
<div class="a " style="left:0px;top:834px;width:1152px;height:30px;background:#d4d0c8;box-shadow:inset 0 1px #d4d0c8,inset 0 2px #fff;"></div>
<div class="a " style="left:2px;top:838px;width:51px;height:22px;background:#d4d0c8;box-shadow:inset 1px 1px #fff,inset -1px -1px #404040,inset -2px -2px #808080;"></div>
<div class="a t" style="left:22px;top:843px;line-height:12px;font-size:11px;color:#000;font-weight:bold;letter-spacing:0.656px;">Пуск</div>
<div class="a " style="left:108px;top:838px;width:160px;height:22px;background:#d4d0c8;box-shadow:inset 1px 1px #fff,inset -1px -1px #404040,inset -2px -2px #808080;"></div>
<div class="a t" style="left:131px;top:843px;line-height:12px;font-size:11px;color:#000;letter-spacing:-1.151px;">MCB</div>
<div class="a " style="left:271px;top:838px;width:159px;height:22px;background:#d4d0c8;box-shadow:inset 1px 1px #fff,inset -1px -1px #404040,inset -2px -2px #808080;"></div>
<div class="a t" style="left:295px;top:843px;line-height:12px;font-size:11px;color:#000;letter-spacing:0.065px;">Задание 1 [Режим огра...</div>
<div class="a " style="left:434px;top:838px;width:159px;height:22px;background:#d4d0c8;box-shadow:inset 1px 1px #fff,inset -1px -1px #404040,inset -2px -2px #808080;"></div>
<div class="a t" style="left:458px;top:843px;line-height:12px;font-size:11px;color:#000;letter-spacing:-0.201px;">Безымянный - Paint</div>
<div class="a " style="left:597px;top:838px;width:159px;height:22px;background:#d4d0c8;box-shadow:inset 1px 1px #fff,inset -1px -1px #404040,inset -2px -2px #808080;"></div>
<div class="a t" style="left:620px;top:843px;line-height:12px;font-size:11px;color:#000;letter-spacing:0.021px;">Microsoft Excel - задани...</div>
<div class="a check" style="left:760px;top:838px;width:160px;height:22px;box-shadow:inset 1px 1px #404040,inset -1px -1px #fff,inset 2px 2px #808080;"></div>
<div class="a t" style="left:785px;top:844px;line-height:12px;font-size:11px;color:#000;font-weight:bold;letter-spacing:0.146px;">Microsoft Visual Basic...</div>
<div class="a " style="left:1046px;top:842px;width:16px;height:16px;background:#0a246a;"></div>
<div class="a t" style="left:1047px;top:844px;line-height:12px;font-size:11px;color:#fff;letter-spacing:-0.945px;">RU</div>
<div class="a " style="left:1066px;top:838px;width:2px;height:22px;box-shadow:inset 1px 0 #808080,inset -1px 0 #fff;"></div>
<div class="a " style="left:1073px;top:838px;width:78px;height:23px;box-shadow:inset 1px 1px #808080,inset -1px -1px #fff;"></div>
<div class="a t" style="left:1114px;top:844px;line-height:12px;font-size:11px;color:#000;letter-spacing:0.094px;">12:10</div>
<div class="a" style="left:0;top:0"><svg class="a" style="left:4px;top:841px" width="16" height="14"><path d="M1 1.5 Q4 0 7.5 1 L7 6.5 Q4 5.5 0.5 7 Z" fill="#f05a18"/><path d="M8.5 1.2 Q12 2.2 15.5 0.8 L15 6.3 Q11.5 7.5 8 6.5 Z" fill="#60c020"/><path d="M0.3 8 Q4 6.5 7 7.5 L6.5 13 Q3 12 0 13.5 Z" fill="#2a6ef0"/><path d="M8 7.6 Q11.5 8.6 14.8 7.3 L14.3 12.8 Q11 14 7.5 13 Z" fill="#f8c800"/></svg><svg class="a" style="left:62px;top:842px" width="16" height="16"><path d="M3.5 8.5H12.5" stroke="#1478d8" stroke-width="2"/><path d="M12.5 8.5A4.6 4.6 0 1 0 11.6 12" stroke="#1e90e8" stroke-width="2.6" fill="none"/><path d="M1 15 Q0 10 6 5 Q11 1 14.5 1.5 Q15 4 13 6" stroke="#f0b020" stroke-width="1.5" fill="none"/></svg><svg class="a" style="left:84px;top:842px" width="16" height="16"><rect x="1" y="2" width="13" height="13" rx="2" fill="#1a6ee0"/><rect x="2.5" y="3.5" width="10" height="10" rx="3" fill="#fff8d0"/><rect x="5" y="4" width="8" height="8" fill="#1a6ee0"/><rect x="6" y="5" width="6" height="6" fill="#e8f0ff"/><path d="M6 10 L11 5" stroke="#1040a0" stroke-width="1.2"/><circle cx="14.5" cy="6" r="1.3" fill="#e05020"/></svg><svg class="a" style="left:112px;top:842px" width="16" height="13"><path d="M0.5 1.5h5l1.5 1.5h7.5v9.5h-14z" fill="#f8e090" stroke="#a08020"/><path d="M1 5h14.5l-1.5 7.5h-13z" fill="#f0c850" stroke="#a08020"/></svg><svg class="a" style="left:275px;top:841px" width="16" height="16"><path d="M5.5 0.5h7l3 3v12h-10z" fill="#dce8fc" stroke="#304870"/><path d="M12.5 0.5v3h3" fill="none" stroke="#304870"/><path d="M7 12.5h6" stroke="#7090c0"/><rect x="0" y="1" width="10" height="9" rx="1" fill="#2a58d8"/><rect x="3" y="3" width="10" height="7" fill="#e8f4ff"/><path d="M4 4 L5.5 9 L7.2 5.5 L9 9 L10.5 4" stroke="#1030a0" stroke-width="1.3" fill="none"/><path d="M13.5 2v9" stroke="#405070"/></svg><svg class="a" style="left:439px;top:841px" width="14" height="16"><path d="M2 7 L3.5 15 L11 15 L12.5 7" fill="#c8d0dc" stroke="#607088" stroke-width="0.8"/><path d="M3.5 3 L5 14" stroke="#3070e0" stroke-width="1.6"/><path d="M7 2 L6.5 14" stroke="#f0c000" stroke-width="1.6"/><path d="M11 5 L8 14" stroke="#f04010" stroke-width="1.8"/><path d="M4.5 10 L5.5 14" stroke="#20a020" stroke-width="1.6"/><circle cx="3" cy="2.5" r="2" fill="#d05018"/><path d="M10 1 L11 5" stroke="#7080d0" stroke-width="1.3"/></svg><svg class="a" style="left:601px;top:841px" width="15" height="15"><path d="M1.5 3.5 Q1.5 0.5 4.5 0.5 H13.5 V13.5 H1.5 Z" fill="#f4fff4" stroke="#108010"/><rect x="3" y="2" width="10" height="3" fill="#90d090"/><rect x="4" y="5" width="10" height="9" fill="#fff"/><path d="M5.5 6.5 L11.5 12.5" stroke="#107010" stroke-width="2"/><path d="M11 7 L6 12" stroke="#50b050" stroke-width="1.6"/></svg><svg class="a" style="left:765px;top:842px" width="16" height="16" shape-rendering="crispEdges"><rect x="5" y="0" width="1" height="1" fill="#000"/><rect x="6" y="0" width="2" height="1" fill="#ff0000"/><rect x="8" y="0" width="1" height="1" fill="#000"/><rect x="4" y="1" width="1" height="1" fill="#000"/><rect x="5" y="1" width="4" height="1" fill="#ff0000"/><rect x="9" y="1" width="1" height="1" fill="#000"/><rect x="4" y="2" width="3" height="1" fill="#ff0000"/><rect x="7" y="2" width="1" height="1" fill="#000"/><rect x="8" y="2" width="2" height="1" fill="#ff0000"/><rect x="10" y="2" width="1" height="1" fill="#000"/><rect x="2" y="3" width="3" height="1" fill="#000"/><rect x="5" y="3" width="5" height="1" fill="#ff0000"/><rect x="10" y="3" width="6" height="1" fill="#000"/><rect x="2" y="4" width="1" height="1" fill="#000"/><rect x="3" y="4" width="3" height="1" fill="#00ffff"/><rect x="6" y="4" width="4" height="1" fill="#000"/><rect x="10" y="4" width="5" height="1" fill="#00ffff"/><rect x="15" y="4" width="1" height="1" fill="#000"/><rect x="1" y="5" width="1" height="1" fill="#000"/><rect x="2" y="5" width="2" height="1" fill="#ffff00"/><rect x="4" y="5" width="11" height="1" fill="#00ffff"/><rect x="15" y="5" width="1" height="1" fill="#000"/><rect x="0" y="6" width="1" height="1" fill="#000"/><rect x="1" y="6" width="2" height="1" fill="#ffff00"/><rect x="3" y="6" width="3" height="1" fill="#000"/><rect x="6" y="6" width="9" height="1" fill="#fff"/><rect x="15" y="6" width="1" height="1" fill="#000"/><rect x="0" y="7" width="1" height="1" fill="#000"/><rect x="1" y="7" width="2" height="1" fill="#ffff00"/><rect x="3" y="7" width="1" height="1" fill="#000"/><rect x="4" y="7" width="2" height="1" fill="#a0a000"/><rect x="6" y="7" width="1" height="1" fill="#000"/><rect x="7" y="7" width="8" height="1" fill="#fff"/><rect x="15" y="7" width="1" height="1" fill="#000"/><rect x="0" y="8" width="1" height="1" fill="#000"/><rect x="1" y="8" width="1" height="1" fill="#ffff00"/><rect x="2" y="8" width="1" height="1" fill="#000"/><rect x="3" y="8" width="4" height="1" fill="#a0a000"/><rect x="7" y="8" width="1" height="1" fill="#000"/><rect x="8" y="8" width="1" height="1" fill="#fff"/><rect x="9" y="8" width="1" height="1" fill="#c0c0c0"/><rect x="10" y="8" width="2" height="1" fill="#fff"/><rect x="12" y="8" width="1" height="1" fill="#c0c0c0"/><rect x="13" y="8" width="2" height="1" fill="#fff"/><rect x="15" y="8" width="1" height="1" fill="#000"/><rect x="1" y="9" width="1" height="1" fill="#000"/><rect x="2" y="9" width="4" height="1" fill="#a0a000"/><rect x="6" y="9" width="1" height="1" fill="#000"/><rect x="7" y="9" width="8" height="1" fill="#fff"/><rect x="15" y="9" width="1" height="1" fill="#000"/><rect x="2" y="10" width="4" height="1" fill="#000"/><rect x="6" y="10" width="9" height="1" fill="#fff"/><rect x="15" y="10" width="1" height="1" fill="#000"/><rect x="2" y="11" width="1" height="1" fill="#000"/><rect x="3" y="11" width="6" height="1" fill="#fff"/><rect x="9" y="11" width="1" height="1" fill="#c0c0c0"/><rect x="10" y="11" width="2" height="1" fill="#fff"/><rect x="12" y="11" width="1" height="1" fill="#c0c0c0"/><rect x="13" y="11" width="2" height="1" fill="#fff"/><rect x="15" y="11" width="1" height="1" fill="#000"/><rect x="2" y="12" width="1" height="1" fill="#000"/><rect x="3" y="12" width="3" height="1" fill="#fff"/><rect x="6" y="12" width="1" height="1" fill="#c0c0c0"/><rect x="7" y="12" width="8" height="1" fill="#fff"/><rect x="15" y="12" width="1" height="1" fill="#000"/><rect x="2" y="13" width="1" height="1" fill="#000"/><rect x="3" y="13" width="12" height="1" fill="#fff"/><rect x="15" y="13" width="1" height="1" fill="#000"/><rect x="2" y="14" width="1" height="1" fill="#000"/><rect x="3" y="14" width="12" height="1" fill="#fff"/><rect x="15" y="14" width="1" height="1" fill="#000"/><rect x="2" y="15" width="14" height="1" fill="#000"/></svg><svg class="a" style="left:1076px;top:846px" width="10" height="8"><path d="M4.5 0.5 L1.5 3.5 L4.5 6.5 M8.5 0.5 L5.5 3.5 L8.5 6.5" stroke="#000" stroke-width="1.6" fill="none"/></svg><svg class="a" style="left:1091px;top:842px" width="14" height="14"><rect x="5.5" y="0.5" width="7" height="6" fill="#3c3c80" stroke="#8080c0"/><rect x="0.5" y="4.5" width="7" height="6" fill="#3c3c80" stroke="#8080c0"/><ellipse cx="4" cy="12.5" rx="3.5" ry="1.5" fill="#a0a0d0"/><ellipse cx="9.5" cy="8.5" rx="3" ry="1.3" fill="#a0a0d0"/></svg></div>
</body></html>
